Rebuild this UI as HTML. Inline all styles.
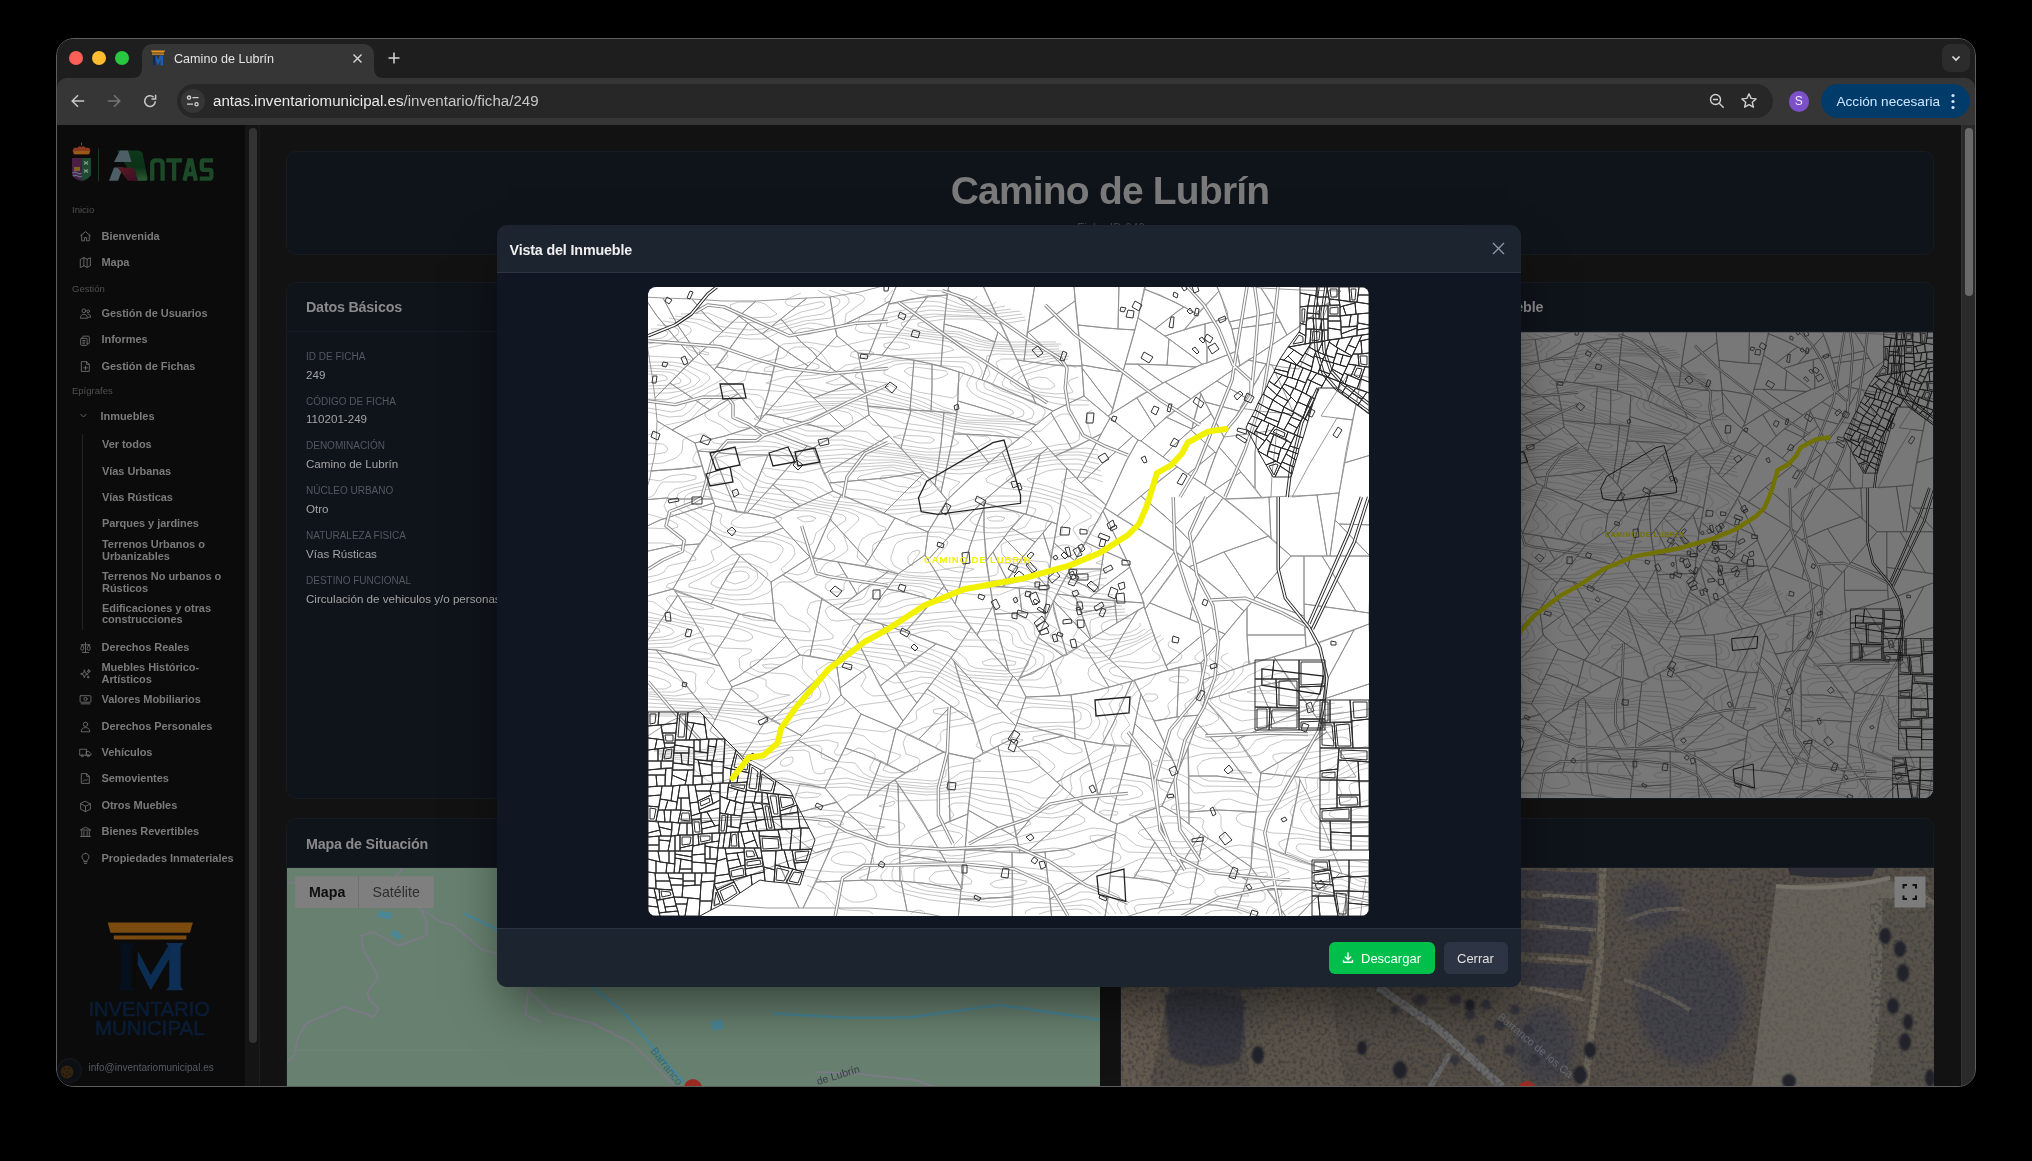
<!DOCTYPE html>
<html><head><meta charset="utf-8">
<style>
*{margin:0;padding:0;box-sizing:border-box}
html,body{width:2032px;height:1161px;overflow:hidden;background:#000;font-family:"Liberation Sans",sans-serif}
.a{position:absolute}
#clip{position:absolute;left:0;top:0;width:2032px;height:1161px;clip-path:inset(38px 56px 74px 56px round 18px);will-change:transform}
.tl{width:14px;height:14px;border-radius:50%;top:51px}
.nav{position:absolute;left:101px;color:#7a7a7a;font-size:11px;font-weight:bold;line-height:11.3px;letter-spacing:-0.05px;white-space:nowrap}
.sec{position:absolute;left:72px;color:#505050;font-size:9.5px;line-height:11px}
.lbl{position:absolute;left:306px;color:#545860;font-size:10px;line-height:12px;white-space:nowrap}
.val{position:absolute;left:306px;color:#a4a4a4;font-size:11.6px;line-height:14px;white-space:nowrap}
.card{position:absolute;background:#0f131a;border:1px solid #161b23;border-radius:10px}
.ico{position:absolute;left:79px;width:13px;height:13px}
</style></head>
<body>
<svg width="0" height="0" style="position:absolute"><defs><symbol id="mp" viewBox="0 0 721 629">
<rect width="721" height="629" fill="#fff"/>
<path d="M378 33L354 37L327 32L297 32L270 36L270 39L282 43L312 45L333 53L345 55L408 55M0 96L19 93L19 90L15 88L0 87M265 201L273 198L272 195L264 192L246 188L234 189L231 192L249 199L265 201M455 195L444 191L429 190L417 192L413 195L420 201L448 210L456 216M377 30L354 33L327 30L291 29L261 33L253 36L254 39L264 42L282 45L309 47L330 54L343 57L363 58L413 57M295 90L300 87L298 84L267 80L260 81L256 84L261 88L282 92L288 92L295 90M0 99L24 98L32 96L33 93L26 87L21 85L0 84M454 189L432 183L411 182L399 184L379 192L382 195L399 199L438 212L454 222M273 204L281 201L284 198L282 195L269 189L249 184L240 183L228 185L212 189L209 192L246 204L261 206L273 204M374 27L351 30L285 27L252 31L239 36L238 39L270 46L309 50L327 56L342 59L366 60L411 59M305 111L309 108L310 96L317 84L315 81L312 80L258 76L246 78L236 84L236 87L257 96L263 102L270 105L305 111M0 102L30 101L39 98L42 96L43 93L36 87L27 83L0 81M453 184L432 177L408 177L388 180L367 186L361 189L358 192L360 195L367 198L393 202L429 213L445 222L453 228L453 231L450 235L441 240L440 243L444 248L453 252M260 213L276 210L285 206L295 198L294 195L267 185L243 180L210 184L189 185L183 186L180 189L183 195L198 202L218 204L249 213L260 213M456 272L448 276L456 278M367 378L368 375L355 372L342 372L334 375L336 378L345 379L367 378M604 486L588 483L585 484L583 486L604 486M211 579L217 576L218 573L213 569L204 565L195 565L189 567L184 570L183 573L187 576L195 578L211 579M372 24L345 27L282 23L252 28L229 33L222 36L220 39L228 43L303 52L327 59L342 61L375 63L411 62M0 53L14 51L19 48L20 45L13 42L3 42M360 129L366 126L364 123L330 110L323 105L319 99L319 96L326 84L323 78L318 75L261 73L246 74L214 84L208 87L207 90L216 93L239 96L254 105L279 112L295 120L315 126L342 129L360 129M0 106L21 106L33 104L46 99L52 93L50 90L33 80L21 78L0 79M429 288L447 284L459 283M451 177L429 172L405 173L381 177L356 183L341 189L338 192L339 195L354 201L387 205L416 213L424 216L443 228L443 231L429 238L426 240L425 243L431 252L443 261L444 264L441 267L412 282L412 285L417 288L429 288M286 216L301 213L301 207L302 204L312 195L270 182L246 178L210 180L183 179L153 186L117 181L113 183L118 189L127 192L153 193L165 196L186 210L222 213L246 219L286 216M265 276L266 273L271 267L272 264L270 263L264 265L260 270L260 276L264 279L265 276M375 381L380 378L380 375L377 372L348 366L336 360L315 359L310 360L307 363L318 372L321 378L327 381L357 384L375 381M0 402L17 402L23 399L22 396L17 393L0 388M537 396L541 393L537 390L528 389L522 391L521 393L525 395L537 396M505 414L510 411L509 408L507 407L498 407L494 411L498 414L505 414M623 492L626 489L630 480L630 477L625 471L625 468L633 466L657 466L690 462L702 459L704 456L699 451L693 450L669 453L636 453L621 459L616 465L610 468L597 470L564 471L554 474L549 480L551 489L555 492L561 494L609 495L623 492M478 513L491 510L495 507L494 504L489 500L480 498L471 498L464 501L462 504L464 510L471 513L478 513M353 549L364 546L383 537L381 534L374 531L336 524L318 516L306 516L300 519L306 528L301 534L303 537L318 542L333 552L353 549M201 585L219 582L226 576L225 570L216 558L213 556L186 560L166 570L147 577M150 582L186 585L201 585M444 627L438 623L429 622L401 624L391 627M363 22L348 24L330 24L309 23L288 19L279 19L234 27L216 28L212 30L207 42L211 45L216 46L252 48L298 54L330 63L378 65L414 64M0 57L21 53L29 48L31 45L30 42L24 39L9 38M167 45L166 42L159 41L152 42L146 45L153 48L162 47L167 45M365 132L375 129L376 126L375 123L358 114L333 105L329 102L328 96L334 87L334 84L330 75L321 70L243 72L207 81L189 92L178 96L186 98L210 97L226 99L249 108L270 113L285 120L315 129L339 132L365 132M0 112L18 113L30 109L54 99L61 93L62 90L59 87L36 77L24 75L0 75M450 172L432 168L417 168L375 174L327 186L312 187L297 186L273 180L246 175L213 177L186 175L153 179L144 176L132 170L123 168L100 171L93 174L91 177L95 183L108 192L117 196L156 201L163 204L170 210L178 213L213 217L240 223L306 219L330 211L345 209L384 209L403 213L416 219L422 228L422 231L414 239L414 246L412 249L405 251L372 252L358 255L353 258L354 267L357 270L363 272L399 275L400 276L402 285L405 288L414 291L429 292L459 286M319 285L326 282L312 280L297 282L290 276L288 273L289 270L299 258L300 255L296 252L291 250L276 249L257 252L250 255L247 258L243 270L243 273L246 279L258 285L276 286L297 282L310 285L319 285M417 271L408 273L405 272L402 264L405 261L414 258L420 258L427 261L429 264L426 267L417 271M379 384L387 378L388 375L387 371L381 368L359 363L348 353L312 353L306 351L300 345L291 343L273 345L263 348L260 351L269 357L301 369L306 372L314 381L321 384L357 387L379 384M0 405L26 405L34 402L35 399L35 396L30 392L9 382L0 380M517 432L522 426L520 420L520 417L525 412L531 407L543 404L552 399L560 393L562 390L561 387L555 385L534 383L515 384L508 387L502 396L488 405L483 411L482 417L492 429L510 434L517 432M711 438L699 442L666 448L636 448L618 450L608 453L601 462L594 465L555 467L531 473L507 474L504 477L534 488L555 499L627 500L633 498L639 484L651 474L720 459M496 516L506 513L509 510L501 499L495 495L462 491L453 493L448 498L449 510L457 516L474 518L496 516M170 510L173 507L159 505L147 507L151 510L156 511L170 510M87 523L102 521L120 510L114 509L72 511M213 615L225 612L229 609L228 606L225 599L211 591L228 583L232 579L237 570L256 564L261 561L267 553L282 545L297 543L312 546L315 549L306 558L306 561L312 563L318 563L334 561L384 546L415 543L433 537L437 534L436 531L429 527L405 531L390 530L360 519L339 516L318 509L288 513L249 514L244 510L234 508L201 508L188 516L163 522L213 526L228 531L249 534L256 537L257 540L252 544L243 548L204 550L144 564L141 567M153 588L167 591L180 597L198 612L204 615L213 615M243 519L234 520L231 519L246 514L247 516L243 519M546 552L546 549L532 537L528 536L519 536L493 543L490 546L498 552L504 553L534 555L546 552M453 627L444 620L435 618L385 621L378 624L377 627M720 619L702 622L695 624L691 627M278 627L275 624L270 623L266 624L263 627M194 3L215 9L217 12L215 15L198 27L197 36L192 40L186 41L171 37L162 36L138 42L117 52L102 52L78 49L69 50L65 54L66 57L78 65L80 69L75 75L66 78L57 78L36 71L0 69M357 19L342 22L321 22L309 20L291 15L279 14L243 17L237 15L237 12L245 3M0 61L27 55L35 51L43 45L43 42L40 39L30 36L15 34M0 121L24 125L33 123L37 120L41 111L45 108L74 93L93 78L123 67L135 57L159 55L189 60L229 51L246 50L294 58L302 60L306 63L294 66L237 69L219 75L198 78L183 88L171 91L152 93L148 96L155 99L180 105L207 102L219 103L264 115L285 123L318 133L372 135L384 131L386 126L385 123L375 116L338 102L336 99L336 96L342 87L338 75L339 69L348 67L384 68L414 66M450 168L432 165L417 165L375 171L309 183L246 173L219 173L192 171L156 174L133 165L120 163L99 164L67 171L75 175L85 183L111 200L146 204L165 213L180 216L207 219L237 227L249 227L279 223L309 223L333 217L348 215L384 214L397 216L403 219L405 225L398 237L397 243L393 244L324 254L294 245L261 246L249 248L229 255L225 258L224 267L228 273L240 282L252 287L267 289L312 291L339 290L348 288L350 285L350 279L354 276L378 277L387 279L395 288L402 292L438 298L441 300L441 303L446 306L465 308M0 211L6 208L12 197L15 195L36 195L48 192L48 189L36 187L22 189L12 194L0 192M0 241L24 242L30 240L29 237L24 234L0 227M0 290L10 288L16 285L20 279L24 278L48 273L47 270L43 267L24 257L15 256L0 256M456 298L444 298L441 297L450 292L459 291M66 321L61 318L47 315L37 315L36 318L42 321L54 323L66 321M124 333L124 330L117 327L102 325L94 327L96 330L105 333L117 334L124 333M384 387L393 380L396 375L396 369L390 365L369 360L365 357L364 348L361 345L357 344L345 343L324 346L303 339L288 339L234 347L223 351L222 354L228 357L255 359L285 368L297 374L311 384L321 388L360 390L375 389L384 387M705 435L662 444L636 441L604 447L595 450L592 453L590 459L583 462L555 461L543 457L531 451L529 447L534 435L540 426L537 420L537 417L569 393L572 387L567 382L551 375L547 372L547 369L557 360M522 354L520 357L521 360L532 366L534 369L533 372L529 375L498 382L471 379L463 381L461 384L465 388L483 392L486 394L486 399L471 417L473 423L482 438L474 446L473 450L477 456L494 462L497 465L462 475L436 486L433 489L432 492L434 501L434 516L411 525L402 527L390 525L379 522L363 513L342 511L318 505L279 508L240 504L216 503L198 500L171 501L138 497L105 497L93 498L85 504L81 505L63 507M0 407L27 409L45 406L47 405L48 402L47 396L48 387L45 385L30 383L15 376L0 374M461 627L450 617L444 613L438 612L414 617L378 615L345 620L282 613L246 604L237 597L233 591L233 588L245 573L272 564L282 559L285 559L289 564L294 567L303 569L315 568L408 551L444 541L456 542L468 545L477 549L488 558L495 560L534 561L546 560L555 557L560 552L560 549L554 540L556 534L553 531L519 529L495 531L481 528L486 525L507 520L528 510L512 501L510 495L513 492L522 491L531 493L540 498L546 506L549 506L576 504L594 504L605 507L615 513L621 513L631 510L649 501L649 498L646 489L648 486L654 482L693 468L720 465M468 528L456 528L451 525L456 523L470 525L469 528L468 528M99 532L108 534L123 532L144 533L171 529L189 528L204 531L219 538L237 540L231 542L216 542L177 548L156 555L129 558M159 598L176 606L186 618L192 622L198 623L221 624L225 627M678 570L687 567L690 564L685 561L660 557L651 557L649 558L648 561L650 564L660 569L669 571L678 570M720 609L693 617L672 615L663 616L649 621L640 627M181 3L198 9L201 12L201 15L199 18L183 31L156 34L111 47L99 48L66 44L48 36L21 31M348 15L344 18L339 19L321 19L314 18L294 10L270 7L262 3M261 61L252 63L243 62L236 60L236 57L243 55L252 55L260 57L262 60L261 61M51 66L42 63L38 60L47 60L52 63L51 66M0 125L21 130L35 129L42 124L53 111L61 105L72 100L91 96L97 93L99 84L106 78L114 75L135 71L138 69L141 63L147 60L156 60L165 61L173 66L182 78L183 81L180 84L168 88L137 90L118 96L174 108L210 107L225 109L261 118L304 132L318 135L381 138L387 136L394 132L397 126L397 123L391 117L385 114L354 104L345 99L345 96L351 84L348 75L354 72L381 72L417 67M444 123L439 126L440 138L444 153L450 156M60 68L51 66L54 64L61 66L60 68M222 69L210 72L202 69L204 65L216 63L222 64L226 66L222 69M450 163L438 161L411 163L321 178L306 179L252 171L222 169L201 167L159 170L129 160L108 159L78 163L54 162L48 165L45 171L45 174L52 180L0 184M0 296L30 288L42 283L57 279L63 276L66 273L63 264L74 258L73 255L51 244L38 234L19 225L16 219L21 207L27 202L55 195L69 187L75 187L84 189L90 192L93 195L96 201L101 204L135 208L163 216L203 222L225 231L231 238L237 240L238 243L222 247L214 252L211 258L209 270L212 273L233 285L258 290L318 295L354 293L364 288L365 282L372 280L379 282L389 291L395 294L417 300L435 309L447 312L468 312M516 351L508 357L504 363L512 369L512 372L507 375L495 376L471 374L459 377L452 381L451 384L455 390L475 399L474 402L461 417L469 435L463 447L468 462L467 465L462 468L424 486L422 492L424 501L422 507L414 516L402 522L393 522L384 519L373 510L366 507L321 501L288 505L276 505L222 500L201 496L168 498L135 491L114 492L87 491L66 496L60 494L43 480L36 477L18 473M348 246L330 245L294 240L264 239L257 237L262 231L276 227L309 227L333 221L348 220L378 219L388 222L387 225L377 240L366 244L348 246M196 303L196 297L200 291L198 288L195 287L186 290L178 297L177 300L179 303L186 305L192 305L196 303M162 345L162 342L157 336L141 328L134 318L129 316L93 318L60 312L30 309L21 309L18 312L25 321L42 328L75 330L114 340L162 345M702 430L687 433L656 432L633 435L585 446L570 454L561 454L550 450L545 447L545 444L548 441L564 437L571 432L570 429L555 420L553 417L553 414L558 408L576 393L579 387L579 384L576 381L562 372L561 369L567 363M388 393L393 391L400 381L405 372L406 369L405 366L399 363L378 357L374 354L369 343L361 339L306 335L291 335L225 343L216 346L209 354L209 357L215 360L249 363L272 369L291 376L309 387L318 390L348 393L388 393M0 409L27 412L63 412L93 416L105 414L110 411L110 408L106 405L96 401L72 403L63 400L59 396L60 393L67 384L65 381L36 377L18 372L0 370M468 627L458 612L450 607L441 605L432 605L418 612L411 613L384 610L348 615L333 615L276 607L258 603L248 597L244 591L244 585L246 579L249 576L267 571L279 570L312 572L357 564L387 563L405 561L417 562L427 567L421 570L406 573L402 576L409 579L426 580L453 578L467 576L472 573L473 570L471 567L451 561L442 552L442 549L450 548L459 549L468 552L471 555L474 562L480 565L537 567L546 566L566 558L576 549L576 546L573 540L573 529L566 519L573 513L582 512L593 516L609 519L627 517L656 504L659 501L657 492L660 488L684 481L693 474L699 471L720 469M552 522L537 524L523 522L524 519L528 517L540 516L557 519L552 522M186 540L177 540L170 537L172 534L183 533L193 534L196 537L186 540M111 542L141 541L151 543L154 546L153 549L144 551L120 550M720 559L705 559L651 551L638 552L631 555L631 558L636 564L660 574L675 575L699 573L720 576M720 604L708 603L693 598L684 599L672 606L651 614L632 627M170 3L174 6L191 12L192 15L190 18L175 27L156 30L114 42L102 43L81 41L71 39L54 33L27 29M329 9L327 12L321 13L303 6M294 4L279 3M441 118L417 118L405 116L360 102L355 99L354 96L360 85L369 80L399 72L421 69M162 84L144 81L126 85L116 84L117 81L123 79L144 81L162 75L171 78L171 81L162 84M0 148L9 145L18 138L42 133L54 120L72 106L81 104L96 102L141 105L168 111L207 111L222 112L258 120L312 136L357 140L381 145L393 144L408 130L414 127L420 127L427 132L432 144L431 153L426 156L408 158L357 169L309 176L198 162L159 165L129 156L117 154L72 157L66 156L57 147L51 147L39 150L35 153L34 165L28 171L15 176L0 177M105 312L87 313L30 304L18 300L20 297L45 289L68 279L84 268L102 267L123 276L129 273L135 264L135 261L132 258L124 255L90 253L75 249L63 244L50 234L30 222L27 216L30 207L35 204L45 201L75 195L81 198L83 204L90 207L198 224L208 228L211 231L210 234L197 246L196 249L200 261L199 264L192 269L177 277L168 290L156 295L132 295L120 306L105 312M360 240L351 241L339 241L326 237L322 234L323 231L327 228L336 225L354 224L367 225L371 228L371 231L367 237L360 240M0 314L6 315L18 324L34 330L78 335L126 349L150 353L168 354L183 352L185 351L185 348L160 327L159 324L162 316L168 314L204 311L210 306L211 300L214 297L222 293L231 291L276 294L309 300L339 301L348 301L369 295L378 294L408 302L435 315L471 316M513 348L483 367L451 375L444 378L441 381L440 387L443 393L461 402L460 405L450 414L460 435L455 447L457 456L453 461L445 465L439 471L417 484L413 492L415 501L413 504L408 508L399 511L393 511L372 503L351 498L321 496L291 502L279 502L225 497L198 491L171 494L160 492L141 484L135 484L120 487L108 487L100 486L97 483L97 480L90 477L69 480L41 474L12 470M696 425L681 427L615 431L594 434L588 432L567 419L562 414L567 405L579 396L586 387L586 384L584 381L575 375L573 372L574 369L580 366M408 399L413 396L413 393L408 387L408 384L415 372L416 369L414 366L405 361L384 354L380 351L375 339L366 334L315 329L260 336L213 336L205 339L203 345L195 354L195 357L201 361L216 364L258 369L288 380L306 389L318 393L348 397L396 401L408 399M0 412L102 419L111 418L126 412L142 408L132 407L126 405L118 399L118 393L95 384L92 381L91 372L94 369L102 366L104 363L102 362L75 361L57 355L47 357L42 360L40 363L60 366L65 369L61 372L47 372L33 367L0 366M434 465L434 462L424 456L414 447L399 447L385 450L385 453L402 457L417 466L426 467L434 465M370 456L375 453L363 450L354 453L354 456L360 458L370 456M143 477L145 474L145 471L144 470L137 471L133 474L132 477L135 479L138 479L143 477M720 555L678 552L651 547L624 546L594 538L589 534L588 531L590 528L594 526L624 524L633 521L648 511L667 504L670 501L669 495L670 492L692 483L705 475L720 472M474 627L469 618L472 612L471 609L456 601L447 599L423 596L417 597L405 604L384 605L351 611L336 611L279 604L264 600L255 594L253 582L258 577L267 575L345 574L362 579L426 586L471 581L492 572L501 571L513 571L531 575L549 575L556 573L564 567L579 560L591 558L609 560L630 569L666 579L678 580L696 579L720 580M720 600L711 599L693 592L681 592L651 607L627 624L625 627M601 609L599 606L587 606L588 609L601 609M153 6L139 12L137 15L139 18L147 20L171 15L175 15L177 18L171 21L153 25L137 33L117 36L81 35L60 26L33 27M441 114L396 109L370 102L362 96L364 90L372 85L401 75L420 72M321 171L306 172L282 171L222 163L195 158L186 158L168 162L156 161L123 149L93 148L84 147L73 138L60 132L57 129L57 126L76 111L83 108L93 106L111 108L115 111L118 117L129 120L159 115L210 114L255 122L312 139L357 143L381 153L384 156L381 159L371 162L321 171M0 156L15 157L18 159L20 162L18 165L15 166L0 168M159 285L150 288L135 285L133 282L143 273L147 267L146 261L144 258L135 254L123 250L93 249L75 245L66 240L57 231L39 220L36 216L37 210L40 207L48 204L63 202L84 210L114 214L138 220L168 222L195 228L198 231L197 234L183 243L179 249L180 252L186 258L187 261L186 264L164 276L159 285M354 234L342 234L339 231L348 229L354 230L357 231L354 234M102 307L93 308L81 308L45 301L41 300L41 297L81 278L90 275L99 275L115 282L119 285L120 288L112 300L102 307M456 370L444 371L435 371L413 360L395 354L389 351L387 348L386 339L381 333L348 321L270 327L240 332L210 332L189 334L183 333L180 330L177 324L179 321L185 318L207 314L214 312L217 309L221 300L225 298L243 295L276 297L312 306L330 308L351 308L371 300L381 299L405 305L423 317L429 319L474 319M507 348L471 365L456 370M0 325L36 334L92 342L100 345L104 348L105 351L99 354L90 354L72 349L63 349L48 351L24 360L0 361M695 420L675 423L636 425L595 423L573 415L571 411L572 408L585 396L593 387L595 384L595 378L597 375L603 375M0 416L105 423L156 413L162 411L164 408L164 405L162 402L147 390L138 387L111 385L103 381L102 378L103 375L108 373L138 370L153 360L171 358L180 359L210 367L258 375L288 384L312 395L360 408L374 411L435 416L441 418L447 423L452 435L450 441L441 452L435 450L421 444L411 442L378 445L357 444L345 448L343 450L342 456L347 462L360 465L384 463L390 464L406 477L407 480L402 485L381 496L360 492L327 490L297 498L279 500L225 494L210 489L192 480L180 482L177 483L177 486L171 487L167 486L165 483L161 465L156 463L138 464L117 473L111 473L87 471L57 473L12 469M720 550L675 547L644 540L645 531L642 525L645 519L653 513L677 507L681 505L681 495L684 492L711 478L720 476M481 627L477 621L477 618L483 614L492 612L519 610L526 606L524 603L510 593L486 588L488 585L492 584L498 583L513 585L543 581L570 583L580 579L588 572L594 570L633 575L666 585L667 588L662 591L639 593L631 597L630 600L634 606L633 609L630 613L621 620L618 627M357 606L333 607L279 600L270 597L266 594L266 585L267 582L273 580L303 579L318 580L339 586L384 587L398 591L398 594L393 598L357 606M720 596L711 594L702 588L704 585L720 584M613 615L617 612L617 609L617 606L612 603L579 600L573 600L567 603L567 606L570 609L577 612L597 615L613 615M123 30L102 31L90 29L84 24L82 18L90 15L111 15L117 17L129 27L123 30M423 106L408 107L390 105L373 99L370 96L370 93L372 90L378 87L410 78L423 78L428 81M430 90L422 93L420 96L425 105L423 106M318 168L277 168L222 160L195 153L183 153L168 156L159 156L129 143L90 140L71 129L70 126L85 114L93 111L102 112L108 120L126 123L141 123L171 117L201 116L255 126L288 136L315 142L348 145L354 147L363 153L364 156L360 159L318 168M165 256L162 258L159 257L123 245L96 246L81 243L73 237L72 234L74 228L69 225L54 222L48 217L47 213L51 210L57 209L78 214L108 217L135 223L162 224L180 228L184 231L183 234L168 246L165 256M90 303L80 303L68 300L63 297L64 294L74 285L87 280L99 280L109 285L110 291L105 297L99 301L90 303M237 327L201 327L193 324L197 321L216 317L223 312L229 303L243 299L258 298L273 300L292 306L303 312L300 315L260 318L237 327M453 366L444 366L435 364L403 351L402 348L409 342L374 321L368 315L368 312L376 306L387 305L401 309L408 318L423 323L432 324L477 322M505 345L489 354L453 366M0 330L50 339L56 342L54 345L24 356L0 357M0 420L60 422L111 426L132 423L165 415L172 411L173 405L168 396L158 387L154 381L155 369L156 366L160 363L171 362L238 378L249 387L267 384L285 386L309 399L354 414L432 420L439 423L442 426L444 435L441 440L435 442L411 439L378 441L355 435L345 437L330 444L329 447L331 453L328 459L338 465L351 469L384 470L391 474L392 477L390 480L381 483L363 485L318 484L312 486L300 494L285 497L234 493L222 490L215 486L207 476L183 474L174 471L173 468L174 462L172 459L168 458L144 460L111 469L87 466L48 470L9 467M663 420L645 420L618 415L591 414L582 411L581 408L583 405L600 389L622 378M687 416L663 420M129 381L117 381L114 378L123 377L133 378L129 381M720 540L684 542L669 541L660 535L652 522L656 516L663 513L687 512L692 510L694 507L690 498L691 495L712 483L720 481M606 597L588 596L582 594L580 591L581 588L588 584L615 580L630 580L638 582L641 585L618 595L606 597M321 597L306 598L289 597L282 594L281 591L287 585L303 583L311 585L321 591L324 594L323 597L321 597M546 600L540 601L531 598L527 594L526 591L529 588L540 585L546 585L554 588L556 591L556 594L552 598L546 600M366 600L351 601L346 600L342 597L347 594L360 591L379 594L377 597L366 600M489 627L486 621L489 618L528 615L549 611L603 620L609 623L611 627M402 102L393 102L383 99L380 96L380 93L390 90L399 91L405 96L407 99L402 102M315 165L276 165L228 158L201 149L159 149L106 132L111 129L144 125L171 119L198 118L240 129L255 136L292 141L321 148L340 150L343 153L327 162L315 165M108 240L96 241L88 240L83 237L84 234L102 222L120 225L134 231L132 234L129 235L108 240M165 234L156 235L149 231L156 229L162 229L168 231L165 234M87 297L78 294L78 291L80 288L85 285L93 284L98 285L101 288L101 291L97 294L87 297M240 319L234 320L231 320L230 318L236 309L243 306L262 303L274 306L278 309L255 313L240 319M450 360L441 360L428 354L425 351L430 342L427 333L430 330L443 327L477 325M503 342L495 348L486 352L450 360M0 333L12 334L41 342L40 345L24 352L0 354M0 424L57 424L114 430L132 428L174 418L180 416L182 411L177 396L169 387L168 384L180 376L189 374L204 375L219 379L225 382L234 391L246 396L258 395L273 390L285 391L306 403L327 411L339 419L353 423L354 426L345 428L327 436L303 440L294 444L292 447L293 453L288 459L288 462L297 466L326 471L333 474L303 480L298 483L298 489L294 492L285 494L237 490L228 488L222 483L222 480L227 471L227 468L224 465L216 462L210 461L198 468L188 468L186 465L190 459L190 456L180 453L150 456L111 464L87 463L48 467L9 466M663 409L648 411L621 406L606 407L599 405L606 403L621 404L627 403L630 399L615 393L616 390L636 385M651 393L651 396L654 399L666 405L663 409M429 435L384 436L362 426L368 423L384 420L423 422L429 423L433 426L433 432L429 435M720 536L696 537L678 536L668 531L663 525L663 522L665 519L669 518L690 517L702 513L704 510L701 501L702 497L708 495L720 495M612 592L603 593L594 591L596 588L600 587L618 585L620 588L612 592M510 627L512 624L516 623L540 622L561 618L593 621L601 624L604 627M306 159L282 162L238 156L228 153L219 145L213 144L159 144L142 138L136 135L135 132L177 121L198 121L211 126L225 138L297 147L304 150L311 156L306 159M474 351L459 353L447 351L443 348L442 345L442 336L443 333L451 330L480 328M497 342L487 348L474 351M0 335L17 339L24 342L26 345L22 348L15 350L0 351M0 427L60 427L89 432L111 438L156 426L183 422L196 417L197 414L187 396L179 387L180 384L186 381L195 380L207 381L216 386L218 390L213 399L218 405L225 409L241 408L276 396L285 397L308 411L311 414L311 417L306 420L288 422L285 423L286 426L297 428L312 424L319 426L320 429L313 432L300 434L275 441L258 449L255 456L258 467L270 471L272 474L269 483L261 485L243 486L235 483L237 479L251 471L253 468L234 462L223 456L216 449L204 446L186 446L114 460L87 460L45 466L6 464M720 532L693 532L686 531L681 528L682 525L684 524L720 513M557 627L564 624L576 623L589 624L594 627M198 139L165 139L156 138L153 135L177 125L190 123L201 126L204 129L205 135L198 139M282 156L271 156L245 150L252 148L273 149L282 150L287 153L282 156M483 345L471 348L462 348L455 345L453 339L455 336L462 333L483 331M492 336L492 339L489 342L483 345M0 339L11 342L12 345L0 347M0 429L36 429L57 430L81 435L105 446L117 447L129 444L145 435L154 432L177 430L213 418L243 414L270 406L279 407L287 411L285 414L269 423L268 426L269 432L265 435L237 445L177 438L154 447L117 454L87 457L48 464L6 463M720 529L702 528L701 525L708 522L720 520" stroke="#b9b9b9" stroke-width=".8" fill="none"/>
<path d="M556 549L553 547L541 565L533 578L511 621L529 618L542 617L551 571L556 549M589 622L610 629L617 630L645 640L625 610L603 581L589 622M554 556L542 617L568 618L589 622L599 594L586 582L554 556M603 580L582 565L556 549L554 556L586 582L599 594L603 581L603 580M135 241L126 231L89 224L67 219L64 231L62 243L82 261L102 254L135 241M123 295L162 270L135 241L102 254L82 261L123 295M218 107L210 66L194 53L189 49L168 71L186 83L218 107M118 127L107 139L165 161L190 146L153 135L118 127M146 94L118 127L153 135L190 146L197 142L169 114L146 94M205 96L168 71L146 94L166 111L205 96M221 128L218 107L205 96L166 111L197 142L221 128M706 343L665 358L626 370L663 423L706 343M724 396L721 337L706 343L667 415L724 396M727 421L724 396L667 415L663 423L668 430L727 421M612 486L638 489L664 491L691 491L708 490L694 467L679 445L659 459L612 486M589 452L612 486L659 459L679 445L662 421L589 452M627 436L662 421L641 393L611 399L627 436M557 413L576 435L589 452L627 436L611 399L584 405L557 413M555 393L557 413L592 403L641 393L626 370L590 381L555 393M599 321L553 376L555 393L601 377L599 350L599 321M674 269L656 269L656 317L708 324L674 269M721 326L723 269L674 269L708 324L721 326M658 360L721 337L721 326L656 317L658 360M599 348L601 377L658 360L657 348L599 348M608 310L599 321L599 348L657 348L656 329L634 321L608 310M643 269L608 310L634 321L656 329L656 269L643 269M464 574L467 547L429 560L413 563L397 565L402 612L423 601L438 592L464 574M405 644L431 641L456 635L460 612L464 574L438 592L423 601L402 612L405 644M364 643L389 645L405 644L397 565L389 566L364 565L364 643M312 612L310 633L349 641L364 643L365 610L342 611L335 612L312 612M317 563L312 612L335 612L342 611L365 610L364 565L356 565L332 563L317 563M412 498L388 476L362 453L350 459L368 549L383 531L412 498M378 566L394 565L416 563L453 553L467 547L469 537L452 529L435 518L378 566M372 566L378 566L384 561L435 518L412 498L383 531L368 549L372 566M320 523L317 563L332 563L356 565L372 566L369 551L320 523M326 472L320 523L369 551L350 459L326 472M91 327L27 304L42 327L66 368L79 348L91 327M138 349L127 334L91 327L79 348L66 368L81 395L88 391L108 377L126 361L138 349M84 400L115 388L152 368L138 349L126 361L108 377L88 391L81 395L84 400M531 380L486 393L506 434L529 430L531 380M552 428L557 412L553 376L531 380L529 430L552 428M530 485L540 460L552 428L528 430L506 434L521 466L530 485M525 473L493 407L487 437L525 473M524 496L530 485L525 473L487 437L481 465L475 486L524 496M462 534L469 537L476 535L495 525L514 519L524 496L475 486L462 534M423 408L378 410L369 436L427 452L426 430L423 408M484 394L451 403L423 408L426 430L427 452L454 457L465 437L484 394M482 459L493 407L486 393L484 394L465 437L454 457L482 459M446 525L462 534L482 459L466 459L446 525M451 510L466 459L436 454L451 510M409 495L428 512L446 525L451 510L442 476L409 495M370 460L409 495L442 476L436 454L415 449L370 460M362 453L370 460L415 449L369 436L362 453M152 219L185 204L165 161L159 159L125 198L152 219M99 226L126 231L152 219L125 198L99 226M96 226L99 226L104 221L150 169L120 168L96 226M89 225L96 226L120 168L92 168L65 165L79 201L89 225M50 164L61 201L67 219L89 225L79 201L65 165L50 164M107 139L77 149L47 156L50 164L85 167L150 169L159 159L107 139M490 323L441 353L461 372L473 351L490 323M485 394L520 383L509 356L496 320L490 323L473 351L461 372L485 394M461 400L485 394L441 353L435 357L461 400M412 409L441 405L461 400L435 357L402 376L412 409M372 391L370 394L378 410L412 409L402 376L385 386L372 391M390 350L379 378L372 391L397 379L415 369L390 350M405 316L390 350L415 369L419 368L409 333L405 316M406 314L405 316L406 325L419 368L442 352L406 314M469 336L496 320L496 316L467 314L469 336M467 319L467 314L427 309L433 326L467 319M443 352L469 336L467 319L433 326L443 352M409 307L406 314L430 340L442 352L443 352L427 309L409 307M441 311L457 313L496 316L482 280L441 311M418 289L412 300L409 307L441 311L449 305L418 289M450 304L482 280L479 274L456 264L450 304M422 282L418 289L449 305L450 304L453 282L422 282M437 255L422 282L453 282L456 264L437 255M455 224L437 255L479 274L455 224M493 308L497 322L535 270L527 264L513 283L493 308M457 221L455 224L477 269L493 308L513 283L527 264L457 221M529 180L493 154L490 153L478 174L457 221L469 229L512 193L529 180M493 209L469 229L510 254L535 270L544 256L517 229L493 209M567 205L529 180L493 209L527 238L543 223L567 205M575 211L567 205L543 223L527 238L544 256L563 227L575 211M621 249L595 227L575 211L558 235L533 274L541 280L573 266L621 249M607 311L643 269L621 249L576 265L607 311M596 324L607 311L576 265L541 280L596 324M551 287L533 274L502 316L542 332L551 287M577 347L596 324L551 287L542 332L577 347M563 341L502 316L497 322L507 352L518 379L535 364L563 341M553 376L577 347L563 341L535 364L518 379L520 383L553 376M192 401L193 408L213 427L249 442L255 434L239 411L222 379L192 401M206 347L188 374L192 401L222 379L206 347M269 416L308 364L288 357L248 387L256 399L269 416M232 399L255 434L269 416L256 399L248 387L232 399M257 379L288 357L255 344L234 337L257 379M216 332L206 347L232 399L257 379L234 337L216 332M239 302L216 332L237 338L257 345L285 313L260 306L239 302M296 299L277 268L250 287L239 302L260 306L285 313L296 299M323 341L309 320L296 299L273 328L257 345L308 364L323 341M335 466L362 453L368 439L327 398L306 374L335 466M271 452L296 465L326 472L335 466L326 435L303 419L271 452M279 402L249 442L271 452L303 419L279 402M303 371L279 402L326 435L312 395L306 374L303 371M365 389L338 359L323 341L303 371L319 389L349 419L365 389M370 394L365 389L349 419L368 439L378 410L370 394M187 42L189 49L194 53L210 66L221 67L242 14L228 22L187 42M250 -5L212 5L182 10L187 42L228 22L242 14L250 -5M234 68L264 73L293 79L296 39L299 8L280 9L234 68M241 17L221 67L234 68L280 9L241 17M303 -13L281 -11L250 -5L241 17L263 12L299 8L303 -13M334 93L388 117L362 56L350 45L334 93M296 37L293 79L314 86L334 93L347 55L318 43L296 37M300 3L296 37L318 43L347 55L350 45L325 22L300 3M330 -12L303 -13L300 3L319 17L362 56L330 -12M387 -3L338 -11L330 -12L369 73L376 74L382 27L387 -3M427 14L426 -1L406 -1L387 -3L379 46L397 35L427 14M380 45L379 46L376 74L415 79L380 45M434 79L427 14L398 35L380 45L415 79L434 79M405 124L436 109L434 79L405 78L369 73L388 117L405 124M259 624L281 627L310 633L313 603L275 596L253 594L259 624M168 595L155 621L221 621L259 624L253 594L224 593L168 595M199 525L197 526L168 595L219 593L228 553L219 543L199 525M241 497L199 525L219 543L228 553L241 497M298 575L272 529L250 497L252 568L275 571L298 575M252 594L282 597L313 603L314 602L298 575L275 571L252 568L252 594M247 493L241 497L219 593L252 594L250 497L247 493M280 544L314 602L320 527L287 541L280 544M300 466L296 465L289 468L271 478L247 493L263 517L280 544L302 534L300 466M326 472L300 466L302 534L320 527L326 472M681 15L648 42L624 58L609 68L600 73L634 80L651 82L671 42L681 15M733 165L743 95L714 89L699 159L696 176L733 165M725 238L730 191L733 165L696 176L687 233L691 237L725 238M722 269L723 269L725 238L691 237L722 269M682 269L722 269L687 233L682 269M679 269L682 269L691 206L669 208L679 269M623 252L643 269L679 269L669 208L621 210L623 252M577 212L595 226L623 252L621 210L577 212M624 78L618 77L613 85L610 92L592 121L619 125L646 127L624 78M705 133L714 89L700 87L673 129L705 133M644 210L691 206L705 133L689 131L661 178L644 210M609 146L576 150L571 160L607 201L607 166L609 146M614 211L623 210L624 187L629 142L609 146L607 166L607 201L614 211M565 204L577 212L614 211L593 185L565 204M557 198L565 204L593 185L571 160L561 185L557 198M598 111L618 77L600 73L583 84L569 94L598 111M591 124L598 111L569 94L552 105L557 115L591 124M576 150L591 124L557 115L576 150M568 166L576 150L563 127L543 143L568 166M540 187L557 198L568 166L567 165L561 170L540 187M515 170L540 187L567 165L543 143L525 159L515 170M544 142L563 127L553 107L544 142M544 142L545 135L551 114L553 107L552 105L518 130L544 142M493 154L515 170L525 159L544 142L518 130L493 154M159 11L108 14L91 29L114 47L159 11M169 70L189 49L182 10L159 11L133 32L153 55L164 64L169 70M160 79L169 70L164 64L153 55L133 32L114 47L160 79M100 36L91 29L51 67L66 83L100 36M69 80L66 83L89 105L112 133L120 106L124 88L85 83L69 80M131 59L100 36L69 80L85 83L124 88L131 59M112 133L160 79L131 59L121 104L112 133M22 96L7 111L9 134L24 143L62 123L22 96M90 107L51 67L22 96L62 123L90 107M47 156L77 149L100 142L107 139L112 133L90 107L64 122L24 143L47 156M388 138L405 124L340 95L311 85L310 114L344 124L388 138M372 151L388 138L344 124L310 114L306 147L340 148L372 151M341 176L372 151L352 149L318 147L341 176M293 205L299 213L322 191L341 176L318 147L306 147L293 205M266 73L234 68L210 66L218 105L220 119L262 123L266 73M284 77L266 73L262 123L283 124L284 101L284 77M309 127L311 85L284 77L284 101L283 124L309 127M287 198L293 205L303 159L309 127L296 125L293 158L287 198M253 161L287 198L293 158L296 125L263 123L253 161M221 128L253 161L263 123L220 119L221 128M610 509L613 486L604 472L586 447L572 429L557 412L549 436L576 464L591 483L610 509M540 461L514 519L525 525L541 537L540 461M598 493L579 468L549 436L540 461L541 489L569 489L598 493M608 525L610 509L598 493L569 489L541 489L541 525L570 523L592 524L608 525M553 547L574 560L603 580L608 525L592 524L570 523L541 525L541 537L553 547M54 179L47 156L9 134L8 157L6 171L3 184L33 182L54 179M64 212L54 179L33 182L3 184L2 191L-5 213L18 211L26 212L56 212L64 212M66 216L64 212L56 212L26 212L18 211L-5 213L-7 230L-7 242L12 233L66 216M51 257L62 243L64 231L67 219L66 216L12 233L-7 242L-4 265L23 259L51 257M25 302L51 257L23 259L-4 265L-2 286L-1 309L25 302M-4 10L-6 10L-4 39L4 88L7 111L45 72L9 29L-4 10M15 11L-4 10L9 29L45 72L50 68L29 37L15 11M44 12L15 11L29 37L50 68L75 44L58 29L44 12M108 14L75 14L44 12L58 29L75 44L108 14M95 469L118 481L136 466L154 449L120 430L95 469M83 402L72 422L62 444L82 460L95 469L120 430L101 417L83 402M188 374L152 368L115 388L84 400L83 402L103 419L123 433L150 410L188 374M193 408L188 374L150 410L123 433L154 449L193 408M639 48L659 34L677 19L693 4L652 3L613 1L626 22L639 48M627 25L621 13L613 1L567 -5L574 12L581 35L609 29L627 25M632 35L627 25L609 29L581 35L584 42L614 38L632 35M592 79L639 48L632 35L614 38L584 42L592 79M434 81L436 109L460 129L463 127L465 122L434 81M434 78L434 81L465 122L475 85L434 78M430 38L434 78L475 85L487 43L457 41L430 38M471 -4L426 -1L430 38L470 42L471 -4M499 -7L471 -4L470 42L487 43L499 -7M515 96L548 80L513 78L489 77L515 96M477 77L463 127L491 109L515 96L489 77L477 77M519 78L548 80L554 77L548 72L521 52L519 78M490 31L477 77L519 78L521 52L490 31M507 42L517 49L536 43L549 27L536 20L530 24L507 42M496 2L490 31L507 42L530 24L536 20L512 8L496 2M571 4L567 -5L527 -8L499 -7L496 2L527 15L549 27L571 4M580 31L579 24L571 4L536 43L544 40L580 31M557 37L532 44L517 49L543 68L554 77L559 76L559 60L557 52L557 37M589 64L583 38L580 31L557 37L557 52L559 60L559 76L589 64M543 112L577 88L592 79L589 64L548 80L517 95L543 112M507 140L518 131L543 112L517 95L489 111L507 140M490 153L493 154L507 140L489 111L460 129L490 153M407 169L429 192L453 147L424 161L407 169M403 126L383 142L407 169L424 162L403 126M462 131L436 109L405 124L403 126L424 162L453 147L462 131M485 149L462 131L429 192L433 196L485 149M458 218L479 173L490 153L485 149L433 196L458 218M427 274L438 255L458 218L440 203L419 181L406 256L427 274M397 334L407 310L427 274L406 256L403 272L399 307L397 334M392 167L353 199L336 214L336 216L378 227L392 167M409 237L419 181L400 161L392 167L378 227L409 237M376 227L336 216L336 244L338 274L357 249L376 227M345 265L338 274L342 299L355 300L359 293L345 265M356 251L345 265L359 293L375 270L356 251M363 241L356 251L375 270L387 255L363 241M404 235L376 227L363 241L387 255L404 235M403 271L409 237L404 235L395 246L403 271M399 300L403 271L395 246L374 271L399 300M399 303L399 300L374 271L355 300L399 303M371 301L342 299L347 327L374 326L371 301M397 325L399 303L371 301L374 326L397 325M361 385L370 394L382 370L397 334L397 325L347 327L352 353L361 385M329 348L339 361L361 385L352 353L345 319L329 348M307 317L329 348L345 319L339 276L336 243L336 221L330 236L322 259L307 317M280 273L288 285L307 317L322 259L330 236L336 221L336 214L314 235L280 273M365 190L400 161L383 142L354 165L365 190M298 216L280 245L277 268L280 273L306 244L298 216M299 213L298 216L299 221L306 244L320 229L331 218L353 199L365 190L354 165L326 188L299 213M190 475L213 427L193 408L169 434L150 453L162 460L190 475M177 501L190 475L162 460L150 453L126 474L108 489L139 495L163 498L170 500L177 501M637 567L644 569L665 578L694 587L672 532L652 493L646 523L637 567M651 490L613 486L604 555L637 567L651 501L652 493L651 490M691 652L710 654L714 615L718 592L703 589L695 628L691 652M643 637L645 640L652 642L671 648L691 652L695 628L703 589L692 586L643 637M619 603L643 637L678 600L670 601L619 603M603 580L619 603L670 601L678 600L692 586L652 574L604 555L603 580M217 279L250 287L277 268L280 245L247 231L217 279M220 274L247 231L193 208L182 232L220 274M165 271L217 279L220 274L182 232L165 271M126 231L157 265L162 270L165 271L174 250L193 208L185 204L126 231M131 577L151 621L155 621L183 561L131 577M189 515L177 501L152 497L141 528L189 515M197 526L189 515L156 524L122 532L139 544L168 566L183 561L197 526M241 149L221 128L165 161L176 187L241 149M275 185L241 149L176 187L181 196L237 191L275 185M236 226L280 245L299 213L276 186L236 226M185 204L236 226L276 186L275 185L237 191L181 196L185 204M92 269L62 243L48 263L25 302L63 317L92 269M127 334L123 295L92 269L63 317L95 328L127 334M190 275L162 270L135 288L190 322L209 307L190 275M241 284L190 275L209 307L241 284M212 338L250 287L241 284L210 307L190 322L212 338M162 369L188 374L212 338L200 329L174 311L162 369M127 334L152 368L162 369L174 311L135 288L123 295L127 334M219 511L257 486L233 474L219 511M197 461L177 501L197 526L219 511L233 474L215 467L197 461M248 442L213 427L197 461L215 467L239 478L248 442M296 465L248 442L239 478L257 486L276 475L296 465M528 587L542 563L553 547L531 529L514 519L487 529L503 550L528 587M507 555L487 529L469 537L462 589L486 591L507 555M523 597L528 587L507 555L486 591L511 594L523 597M456 635L464 634L504 622L511 621L523 597L510 594L498 592L477 590L462 589L461 605L456 635M64 603L66 617L119 621L151 621L131 577L64 603M30 308L25 302L-1 309L-4 359L30 308M72 379L39 322L30 308L-4 359L-5 362L10 363L40 370L72 379M67 433L84 400L72 379L31 368L8 363L25 382L43 405L67 433M56 420L26 383L8 363L-5 362L-6 397L-6 453L21 435L42 425L56 420" stroke="#8f8f8f" stroke-width=".9" fill="none"/>
<path d="M47.0 25.3L59.7 18.0L76.0 19.9L108.5 34.4L141.0 48.8L180.9 41.6L208.0 36.2L240.0 34.4M0.0 54.0L27.0 56.0L72.0 59.7L108.5 72.3L141.0 81.4L181.0 86.8L240.0 81.4M0.0 114.0L27.0 117.6L54.0 110.3L79.6 110.3L85.0 117.6L85.0 130.2L101.0 137.5L115.8 148.3L108.5 153.7L79.6 153.7L65.0 170.0L54.0 210.0M115.8 148.3L162.8 133.8L199.0 115.8L240.0 97.7M240.0 155.5L217.0 166.4L199.0 190.0L195.3 210.0M294.3 3.6L321.4 12.7L341.3 25.3L377.5 50.6L413.6 72.3L419.0 81.4L417.2 101.3L420.9 123.0L435.3 148.3L457.0 159.2L480.0 168.2M397.3 18.0L426.3 47.0L480.0 88.6L512.0 113.0L552.0 138.0M250.8 15.4L316.0 61.5L341.3 77.8L399.2 115.8M606.7 0.0L610.3 25.3L606.7 72.4L603.0 108.6L588.6 130.3L577.7 143.0M539.7 0.0L556.0 18.0L570.5 41.6L585.0 77.8L603.0 94.0L603.0 108.6M32.4 533.4L90.0 531.6L153.0 530.7L180.0 533.4L198.0 544.2L240.0 558.6L294.0 562.2L366.0 558.6L402.0 574.8L438.0 598.3L480.0 616.3M187.2 629.0L194.5 591.0L216.0 578.4L240.0 578.4L312.0 576.6L366.0 582.0L402.0 598.3L420.0 629.0M480.0 506.4L438.0 510.0L402.0 517.2L380.4 531.6L348.0 542.4L321.0 556.8M301.2 420.0L299.4 465.0L290.4 501.0L290.4 528.0L304.8 556.8M480.0 445.0L501.6 474.0L510.6 528.0L525.0 567.6L561.0 585.6L615.0 591.0L642.0 592.8M670.8 443.4L638.4 501.0L620.4 531.6L616.8 546.0L624.0 582.0L633.0 629.0M534.0 629.0L570.0 610.8L624.0 600.0L660.0 601.8L721.0 614.4M557.4 448.8L624.0 446.1L660.0 447.0M563.2 313.0L597.6 311.3L633.8 325.8L661.0 340.3M557.8 210.0L541.5 246.2L548.8 287.8L565.0 318.6L570.5 354.7L566.8 391.0L556.0 420.0L537.0 453.0L527.0 493.0L532.0 543.0L552.0 573.0M525.2 210.0L527.0 264.3L539.7 304.0L552.4 336.6L557.8 372.8L550.6 409.0L522.0 443.0L507.0 493.0L512.0 543.0L537.0 583.0M599.0 0.0L592.0 43.0L584.0 93.0L564.0 143.0L548.0 183.0L532.0 210.0M630.0 0.0L624.0 53.0L614.0 113.0L597.0 163.0L577.0 210.0M0.0 282.3L14.5 273.3L34.4 264.3L36.2 253.4L18.0 238.9L21.7 224.5L45.2 215.4L54.3 210.0M153.7 239.0L168.2 286.0L180.9 289.6L240.0 298.6M0.0 394.5L21.7 420.0L52.0 453.0" stroke="#8a8a8a" stroke-width="3.4" fill="none" stroke-linejoin="round"/>
<path d="M47.0 25.3L59.7 18.0L76.0 19.9L108.5 34.4L141.0 48.8L180.9 41.6L208.0 36.2L240.0 34.4M0.0 54.0L27.0 56.0L72.0 59.7L108.5 72.3L141.0 81.4L181.0 86.8L240.0 81.4M0.0 114.0L27.0 117.6L54.0 110.3L79.6 110.3L85.0 117.6L85.0 130.2L101.0 137.5L115.8 148.3L108.5 153.7L79.6 153.7L65.0 170.0L54.0 210.0M115.8 148.3L162.8 133.8L199.0 115.8L240.0 97.7M240.0 155.5L217.0 166.4L199.0 190.0L195.3 210.0M294.3 3.6L321.4 12.7L341.3 25.3L377.5 50.6L413.6 72.3L419.0 81.4L417.2 101.3L420.9 123.0L435.3 148.3L457.0 159.2L480.0 168.2M397.3 18.0L426.3 47.0L480.0 88.6L512.0 113.0L552.0 138.0M250.8 15.4L316.0 61.5L341.3 77.8L399.2 115.8M606.7 0.0L610.3 25.3L606.7 72.4L603.0 108.6L588.6 130.3L577.7 143.0M539.7 0.0L556.0 18.0L570.5 41.6L585.0 77.8L603.0 94.0L603.0 108.6M32.4 533.4L90.0 531.6L153.0 530.7L180.0 533.4L198.0 544.2L240.0 558.6L294.0 562.2L366.0 558.6L402.0 574.8L438.0 598.3L480.0 616.3M187.2 629.0L194.5 591.0L216.0 578.4L240.0 578.4L312.0 576.6L366.0 582.0L402.0 598.3L420.0 629.0M480.0 506.4L438.0 510.0L402.0 517.2L380.4 531.6L348.0 542.4L321.0 556.8M301.2 420.0L299.4 465.0L290.4 501.0L290.4 528.0L304.8 556.8M480.0 445.0L501.6 474.0L510.6 528.0L525.0 567.6L561.0 585.6L615.0 591.0L642.0 592.8M670.8 443.4L638.4 501.0L620.4 531.6L616.8 546.0L624.0 582.0L633.0 629.0M534.0 629.0L570.0 610.8L624.0 600.0L660.0 601.8L721.0 614.4M557.4 448.8L624.0 446.1L660.0 447.0M563.2 313.0L597.6 311.3L633.8 325.8L661.0 340.3M557.8 210.0L541.5 246.2L548.8 287.8L565.0 318.6L570.5 354.7L566.8 391.0L556.0 420.0L537.0 453.0L527.0 493.0L532.0 543.0L552.0 573.0M525.2 210.0L527.0 264.3L539.7 304.0L552.4 336.6L557.8 372.8L550.6 409.0L522.0 443.0L507.0 493.0L512.0 543.0L537.0 583.0M599.0 0.0L592.0 43.0L584.0 93.0L564.0 143.0L548.0 183.0L532.0 210.0M630.0 0.0L624.0 53.0L614.0 113.0L597.0 163.0L577.0 210.0M0.0 282.3L14.5 273.3L34.4 264.3L36.2 253.4L18.0 238.9L21.7 224.5L45.2 215.4L54.3 210.0M153.7 239.0L168.2 286.0L180.9 289.6L240.0 298.6M0.0 394.5L21.7 420.0L52.0 453.0" stroke="#fff" stroke-width="1.5" fill="none" stroke-linejoin="round"/>
<path d="M0.0 48.8L27.0 38.0L43.4 27.0L59.7 7.2L68.7 0.0M670.0 0.0L666.4 27.0L668.2 63.3L675.4 86.8L688.0 101.3L721.0 125.0M678.0 0.0L674.0 27.0L676.0 63.3L683.0 84.0L695.0 97.0L721.0 117.0M670.0 101.3L653.7 135.7L642.8 181.0L639.2 210.0M630.2 210.0L630.2 282.4L637.4 311.3L661.0 340.3L671.8 360.2L679.0 391.0L675.4 420.0L670.8 443.4M713.4 210.0L700.7 246.2L661.0 336.6M720.6 210.0L706.2 255.2L664.5 342.0" stroke="#262626" stroke-width="3.4" fill="none" stroke-linejoin="round"/>
<path d="M0.0 48.8L27.0 38.0L43.4 27.0L59.7 7.2L68.7 0.0M670.0 0.0L666.4 27.0L668.2 63.3L675.4 86.8L688.0 101.3L721.0 125.0M678.0 0.0L674.0 27.0L676.0 63.3L683.0 84.0L695.0 97.0L721.0 117.0M670.0 101.3L653.7 135.7L642.8 181.0L639.2 210.0M630.2 210.0L630.2 282.4L637.4 311.3L661.0 340.3L671.8 360.2L679.0 391.0L675.4 420.0L670.8 443.4M713.4 210.0L700.7 246.2L661.0 336.6M720.6 210.0L706.2 255.2L664.5 342.0" stroke="#fff" stroke-width="1.5" fill="none" stroke-linejoin="round"/>
<path d="M111 549L113 564L134 563L132 550L111 549M130 543L111 544L111 549L132 550L130 543M144 542L130 543L134 563L142 563L144 542M153 541L144 542L142 563L152 563L153 541M164 562L167 553L161 541L153 541L152 563L164 562M136 563L128 564L127 578L141 581L136 563M144 563L136 563L141 581L148 583L144 563M160 575L164 562L144 563L146 576L160 575M156 585L160 575L146 576L148 583L156 585M138 596L152 598L156 585L145 582L138 596M126 595L138 596L145 582L127 578L126 595M127 583L128 564L113 564L116 580L127 583M117 594L126 595L127 583L116 580L117 594M77 546L72 546L70 561L75 561L77 546M83 545L77 546L75 561L81 561L83 545M90 545L83 545L81 561L91 561L90 545M93 545L90 545L91 561L97 561L93 545M96 557L97 561L110 561L107 553L96 557M104 544L93 545L96 557L107 553L104 544M113 561L111 544L104 544L110 561L113 561M67 589L66 597L83 593L81 587L67 589M69 574L67 589L81 587L79 571L69 574M77 561L70 561L69 574L79 571L77 561M81 582L83 593L98 589L97 578L81 582M93 579L97 578L96 565L89 566L93 579M79 574L81 582L93 579L91 572L79 574M78 567L79 574L91 572L89 566L78 567M96 561L77 561L78 567L96 565L96 561M106 561L96 561L97 573L110 571L106 561M114 571L113 561L106 561L110 571L114 571M115 579L114 571L97 573L97 582L115 579M116 585L115 579L97 582L98 589L116 585M104 598L112 593L117 594L116 585L103 588L104 598M92 606L104 598L103 588L85 593L92 606M86 595L85 593L66 597L69 603L86 595M75 617L82 613L92 606L86 595L69 603L75 617M63 623L75 617L66 597L66 597L63 623M67 594L67 586L54 586L53 595L67 594M64 614L67 594L53 595L52 614L64 614M51 629L52 629L63 623L64 614L52 614L51 629M23 598L26 610L34 610L35 598L23 598M21 591L23 598L35 598L35 592L21 591M35 586L20 586L21 591L35 592L35 586M35 594L35 599L47 598L47 594L35 594M47 586L35 586L35 594L47 594L47 586M53 598L54 586L47 586L47 598L53 598M52 612L53 598L35 599L34 610L52 612M37 629L51 629L52 612L40 611L37 629M39 617L40 611L26 610L28 617L39 617M31 629L37 629L39 617L28 617L31 629M11 602L6 601L9 613L12 613L11 602M26 610L24 603L11 602L12 613L26 610M15 612L9 613L11 626L18 625L15 612M28 619L26 610L15 612L17 620L28 619M30 624L28 619L17 620L18 625L30 624M12 629L31 629L30 624L11 626L12 629M0 619L0 629L12 629L10 620L0 619M0 610L0 619L10 620L8 611L0 610M0 601L0 610L8 611L6 601L0 601M22 594L20 586L7 586L8 594L22 594M8 602L24 603L22 594L8 594L8 602M0 585L0 601L8 602L7 586L0 585M50 547L45 548L45 559L51 558L50 547M64 546L50 547L51 558L64 555L64 546M71 554L72 546L64 546L64 555L71 554M44 568L44 575L57 576L57 567L44 568M57 556L45 559L44 568L57 567L57 556M70 561L71 554L57 556L57 559L70 561M62 560L57 559L57 572L62 572L62 560M69 572L70 561L62 560L62 572L69 572M68 577L69 572L57 572L57 576L68 577M58 586L67 586L68 577L58 576L58 586M44 586L58 586L58 576L44 575L44 586M32 548L27 549L27 564L32 564L32 548M45 558L45 548L32 548L32 561L45 558M44 564L45 558L32 561L32 564L44 564M44 570L44 564L27 564L27 567L44 570M44 574L44 570L27 567L27 571L44 574M44 582L44 574L33 572L32 582L44 582M31 586L44 586L44 582L32 582L31 586M26 586L31 586L33 572L27 571L26 586M18 586L26 586L27 577L19 576L18 586M8 586L18 586L19 576L8 574L8 586M0 572L0 585L8 586L8 574L0 572M21 576L27 577L27 564L21 564L21 576M12 575L21 576L21 564L10 564L12 575M0 564L0 572L12 575L10 564L0 564M20 564L27 564L27 549L23 549L20 564M22 554L23 549L11 549L11 553L22 554M11 564L20 564L22 554L11 553L11 564M0 558L0 564L11 564L11 558L0 558M0 550L0 558L11 558L11 549L0 550M81 496L72 496L72 509L79 512L81 496M98 505L99 495L81 496L80 500L98 505M90 503L80 500L79 512L87 514L90 503M96 517L98 505L90 503L87 514L96 517M82 513L72 509L72 526L77 527L82 513M88 515L82 513L77 527L86 528L88 515M94 529L96 517L88 515L86 528L94 529M83 528L80 527L79 539L83 540L83 528M92 541L94 529L83 528L83 540L92 541M78 546L91 545L92 541L79 539L78 546M71 546L78 546L80 527L72 526L71 546M42 516L43 529L52 526L50 515L42 516M47 498L40 498L42 516L50 515L47 498M64 497L47 498L48 504L62 504L64 497M72 505L72 496L64 497L62 504L72 505M50 514L51 523L65 517L63 508L50 514M62 504L48 504L50 514L63 508L62 504M72 513L72 505L62 504L65 517L72 513M72 521L72 513L51 523L52 526L72 521M53 536L54 542L67 539L64 534L53 536M59 525L53 526L53 536L64 534L59 525M71 538L72 521L59 525L67 539L71 538M54 547L71 546L71 538L54 542L54 547M53 532L53 526L43 529L44 533L53 532M45 548L54 547L53 532L44 533L45 548M39 548L45 548L44 536L39 536L39 548M30 548L39 548L39 536L32 536L30 548M23 549L30 548L32 536L24 535L23 549M24 543L24 535L10 535L11 540L24 543M13 549L23 549L24 543L11 540L13 549M0 546L0 550L13 549L12 543L0 546M0 534L0 546L12 543L10 535L0 534M17 523L28 523L29 515L20 513L17 523M12 512L10 523L17 523L20 513L12 512M25 499L14 499L12 512L23 514L25 499M32 498L25 499L23 514L29 515L32 498M41 511L40 498L32 498L30 511L41 511M33 511L30 511L28 523L33 523L33 511M43 524L41 511L33 511L33 523L43 524M30 536L44 536L43 524L33 523L30 536M22 535L30 536L33 523L23 523L22 535M17 535L22 535L23 523L16 523L17 535M8 534L17 535L16 523L10 523L8 534M0 519L0 534L8 534L11 520L0 519M0 509L0 519L11 520L13 508L0 509M0 500L0 509L13 508L14 499L0 500M17 499L23 499L25 481L18 481L17 499M9 499L17 499L17 488L8 488L9 499M0 488L0 500L9 499L8 488L0 488M0 483L0 488L17 488L18 481L0 483M13 482L25 481L25 474L13 474L13 482M0 474L0 483L13 482L13 474L0 474M14 474L25 474L26 460L16 461L14 474M10 474L14 474L16 461L10 462L10 474M0 463L0 474L10 474L10 462L0 463M28 446L29 436L13 438L14 446L28 446M27 456L28 446L14 446L16 456L27 456M17 461L26 460L27 456L16 456L17 461M7 462L17 461L16 453L9 452L7 462M0 451L0 463L7 462L9 452L0 451M0 439L0 451L16 453L13 438L0 439M11 425L0 425L0 439L10 438L11 425M30 425L11 425L10 438L29 436L30 425M46 464L46 472L59 474L60 466L46 464M52 453L46 453L46 464L52 465L52 453M61 452L52 453L52 465L60 466L61 452M60 459L59 474L65 474L68 460L60 459M69 452L61 452L60 459L68 460L69 452M76 475L77 452L69 452L65 474L76 475M75 486L76 475L64 474L64 486L75 486M65 497L75 496L75 486L64 486L65 497M50 473L46 472L45 489L53 489L50 473M64 478L64 474L50 473L51 476L64 478M64 488L64 478L51 476L53 489L64 488M54 497L65 497L64 488L54 489L54 497M45 498L54 497L54 489L45 489L45 498M37 498L45 498L46 483L40 483L37 498M24 488L23 499L37 498L38 494L24 488M24 483L24 488L38 494L40 483L24 483M25 476L24 483L46 483L46 478L25 476M40 478L46 478L46 461L41 460L40 478M34 477L40 478L41 466L33 466L34 477M26 466L25 476L34 477L33 466L26 466M27 458L26 466L41 466L41 460L27 458M27 453L27 458L46 461L46 453L27 453M40 425L30 425L27 453L38 453L40 425M41 453L59 452L57 438L46 436L41 453M39 435L38 453L41 453L46 436L39 435M56 429L52 425L40 425L39 435L57 438L56 429M77 452L56 429L59 452L77 452L77 452M89 496L99 495L101 486L91 483L89 496M82 496L89 496L91 483L83 482L82 496M75 480L75 496L82 496L83 482L75 480M88 463L77 452L75 480L83 482L88 463M102 477L97 473L88 463L83 482L101 486L102 477M113 483L102 477L98 503L110 505L113 483M128 494L113 483L110 505L125 507L128 494M145 509L142 503L128 494L125 507L145 509M119 543L127 543L121 517L114 517L119 543M109 544L119 543L117 532L107 534L109 544M101 544L109 544L107 534L99 536L101 544M92 537L91 545L101 544L99 536L92 537M115 521L114 517L104 515L106 523L115 521M109 534L117 532L115 521L106 523L109 534M94 526L92 537L109 534L107 525L94 526M96 515L94 526L107 525L104 515L96 515M108 505L98 503L96 515L106 516L108 505M114 505L108 505L106 516L114 516L114 505M119 506L114 505L114 516L121 517L119 506M124 530L127 543L134 542L133 529L124 530M130 507L119 506L124 530L133 529L130 507M149 518L145 509L130 507L132 524L149 518M132 528L134 542L152 541L150 525L132 528M149 518L132 524L132 528L150 525L149 518M161 541L149 518L149 518L152 541L161 541M692 29L692 18L680 19L680 29L692 29M693 34L692 29L680 29L680 34L693 34M693 43L693 34L680 34L680 41L693 43M680 53L694 51L693 43L680 41L680 53M659 26L659 31L671 32L671 27L659 26M672 19L660 19L659 26L671 27L672 19M680 32L680 19L672 19L671 32L680 32M665 31L659 31L658 42L666 42L665 31M674 32L665 31L666 42L672 43L674 32M680 43L680 32L674 32L672 43L680 43M673 55L680 53L680 43L675 43L673 55M662 56L673 55L675 43L663 42L662 56M657 57L662 56L663 42L658 42L657 57M651 45L640 60L657 57L658 49L651 45M652 36L652 43L651 45L658 49L658 38L652 36M652 20L652 36L658 38L660 19L652 20M660 19L670 19L669 9L662 8L660 19M652 6L652 20L660 19L662 8L652 6M669 0L652 0L652 6L669 9L669 0M669 10L670 19L682 18L681 10L669 10M679 0L669 0L669 10L681 10L679 0M681 12L682 18L692 18L691 13L681 12M691 0L679 0L681 12L691 13L691 0M701 0L691 0L691 13L702 15L701 0M711 0L701 0L702 15L709 15L711 0M721 8L721 0L711 0L710 8L721 8M721 17L721 8L710 8L709 15L721 17M698 28L708 27L707 16L695 19L698 28M692 20L692 29L698 28L695 19L692 20M707 15L691 13L692 20L707 16L707 15M721 26L721 17L707 15L708 27L721 26M693 47L694 51L709 49L709 41L693 47M693 40L693 47L709 41L709 39L693 40M703 28L692 29L693 40L701 40L703 28M710 27L703 28L701 40L709 39L710 27M721 38L721 26L710 27L710 36L721 38M721 41L721 38L710 36L709 43L721 41M721 47L721 41L709 43L709 49L721 47M649 78L655 69L646 63L640 69L649 78M636 73L649 78L649 78L640 69L636 73M641 60L640 60L634 69L632 72L636 73L646 63L641 60M663 56L641 60L655 69L663 56M675 72L677 68L668 64L666 69L675 72M663 84L670 87L675 72L666 69L663 84M652 74L649 78L663 84L664 80L652 74M657 66L652 74L664 80L666 71L657 66M661 60L657 66L666 71L668 64L661 60M675 54L663 56L661 60L670 65L675 54M682 53L675 54L670 65L677 68L682 53M695 88L699 80L686 76L684 82L695 88M680 90L692 95L695 88L684 82L680 90M671 83L670 87L680 90L682 87L671 83M675 73L671 83L682 87L686 76L675 73M703 70L704 69L690 61L688 66L703 70M692 78L699 80L703 70L695 68L692 78M685 76L692 78L695 68L688 66L685 76M677 68L675 73L685 76L687 71L677 68M681 55L677 68L687 71L690 61L681 55M691 52L682 53L681 55L688 60L691 52M705 49L691 52L688 60L697 65L705 49M700 58L697 65L704 69L708 61L700 58M714 48L705 49L700 58L708 61L714 48M721 52L721 47L714 48L711 54L721 52M713 54L711 54L705 67L714 67L713 54M721 66L721 52L713 54L714 67L721 66M710 67L705 67L700 77L711 79L710 67M721 80L721 66L710 67L711 79L721 80M697 97L709 102L712 93L700 88L697 97M696 86L692 95L697 97L700 88L696 86M708 78L700 77L696 86L703 89L708 78M717 80L708 78L703 89L712 93L717 80M721 95L721 80L717 80L713 92L721 95M721 106L721 95L713 92L709 102L721 106M651 162L655 151L647 148L642 159L651 162M650 167L651 162L642 159L640 163L650 167M648 173L650 167L640 163L638 167L648 173M646 180L648 173L638 167L634 175L646 180M644 187L646 180L634 175L632 179L644 187M627 190L643 190L644 187L632 179L627 190M618 178L625 190L627 190L633 177L628 174L618 178M610 164L618 178L628 174L610 164M640 145L627 139L622 146L637 153L640 145M643 156L647 148L640 145L637 153L643 156M639 153L626 147L622 157L634 161L639 153M640 163L643 156L639 153L634 161L640 163M629 175L633 177L640 163L633 161L629 175M631 167L633 161L622 157L620 164L631 167M619 169L629 175L631 167L620 164L619 169M623 156L626 147L622 146L618 152L623 156M610 163L610 164L619 169L623 156L618 152L610 163M599 143L603 150L610 163L617 154L599 143M621 136L614 133L607 144L617 148L621 136M620 149L627 139L621 136L617 148L620 149M606 147L617 154L620 149L607 144L606 147M600 136L598 141L599 143L606 147L610 140L600 136M604 129L600 136L610 140L614 133L604 129M646 147L655 151L660 134L655 130L646 147M653 134L655 130L646 125L643 130L653 134M649 141L653 134L643 130L640 136L649 141M636 143L646 147L649 141L640 136L636 143M644 129L646 125L636 120L634 125L644 129M629 140L636 143L644 129L634 125L629 140M634 126L636 120L625 113L621 122L634 126M631 135L634 126L621 122L618 130L631 135M616 134L629 140L631 135L618 130L616 134M607 123L604 129L616 134L618 129L607 123M610 116L607 123L618 129L621 122L610 116M615 107L610 116L621 122L625 113L615 107M710 118L721 127L721 106L719 105L710 118M714 112L719 105L708 101L704 106L714 112M700 111L710 118L714 112L704 106L700 111M694 106L700 111L708 101L699 98L694 106M690 103L694 106L699 98L692 95L690 103M673 101L688 101L690 103L692 95L679 90L673 101M657 132L660 134L665 116L657 132M669 86L663 84L659 92L663 94L669 86M674 99L679 90L669 86L663 94L674 99M663 94L659 92L654 105L658 107L663 94M667 112L670 101L673 101L674 99L663 94L658 107L667 112M663 110L654 105L650 115L659 119L663 110M663 121L665 116L667 112L663 110L659 119L663 121M655 131L657 132L663 121L659 119L655 131M645 125L655 131L659 119L650 115L645 125M650 93L640 90L636 97L647 102L650 93M654 105L658 96L650 93L647 102L654 105M646 101L636 97L634 100L642 109L646 101M649 116L654 105L646 101L642 109L649 116M636 120L645 125L649 116L643 110L636 120M640 114L643 110L634 100L629 108L640 114M625 113L636 120L640 114L629 108L625 113M619 99L615 107L625 113L629 108L619 99M621 94L619 99L629 108L633 102L621 94M626 98L633 102L640 90L634 88L626 98M626 85L621 94L626 98L634 88L626 85M650 93L658 96L663 84L655 81L650 93M644 91L650 93L655 81L648 78L644 91M639 90L644 91L648 78L643 76L639 90M627 82L626 85L639 90L640 85L627 82M632 72L627 82L640 85L643 76L632 72M721 535L721 519L703 520L703 535L721 535M721 549L721 535L703 535L703 549L721 549M703 563L721 563L721 549L703 549L703 563M703 546L703 534L682 534L683 545L703 546M683 563L703 563L703 546L683 545L683 563M672 534L672 563L683 563L682 534L672 534M672 522L672 534L703 534L703 520L672 522M712 520L721 519L721 494L711 494L712 520M712 508L711 494L689 493L689 508L712 508M689 521L712 520L712 508L689 508L689 521M672 493L672 522L689 521L689 493L672 493M721 475L721 461L691 461L690 473L721 475M711 494L721 494L721 475L710 474L711 494M689 493L711 494L710 474L690 473L689 493M672 484L672 493L689 493L690 482L672 484M672 461L672 484L690 482L691 461L672 461M688 461L705 461L704 435L686 435L688 461M672 436L672 461L688 461L686 435L672 436M682 413L672 413L672 436L682 436L682 413M702 413L682 413L682 436L704 435L702 413M721 432L721 413L702 413L703 434L721 432M721 461L721 432L703 434L705 461L721 461M677 399L677 373L651 373L651 400L677 399M677 413L677 399L651 400L651 413L677 413M677 432L677 413L651 413L651 432L677 432M651 443L677 443L677 432L651 432L651 443M621 443L651 443L651 421L622 420L621 443M607 420L607 443L621 443L622 420L607 420M629 421L651 421L651 392L628 392L629 421M607 392L607 420L629 421L628 392L607 392M626 373L607 373L607 392L624 392L626 373M651 373L626 373L624 392L651 392L651 373M684 591L686 604L701 604L701 589L684 591M701 573L681 573L684 591L701 589L701 573M721 589L721 573L701 573L701 590L721 589M721 605L721 589L701 590L701 604L721 605M721 618L721 605L701 604L700 616L721 618M700 629L721 629L721 618L700 616L700 629M690 629L700 629L701 604L686 604L690 629M672 629L690 629L686 609L670 609L672 629M664 609L664 629L672 629L670 609L664 609M664 596L664 609L686 609L685 598L664 596M664 586L664 596L685 598L682 583L664 586M681 573L664 573L664 586L682 583L681 573M114 551L115 562L131 561L130 552L114 551M158 573L161 564L147 565L148 574L158 573M141 594L150 596L154 586L146 585L141 594M128 593L136 594L141 584L129 581L128 593M88 547L84 548L83 559L89 559L88 547M83 584L84 590L96 588L95 581L83 584M105 564L98 564L99 570L107 569L105 564M113 577L112 573L99 575L99 579L113 577M76 614L89 606L85 598L72 604L76 614M66 619L72 616L68 605L66 619M23 608L22 605L13 604L14 610L23 608M62 549L52 549L53 555L62 553L62 549M42 557L43 550L34 550L34 558L42 557M96 502L97 498L83 498L83 499L96 502M73 544L76 544L78 529L74 528L73 544M52 515L53 519L62 515L61 511L52 515M47 545L52 545L51 535L46 535L47 545M33 533L42 534L41 526L34 526L33 533M2 521L2 532L6 532L8 522L2 521M16 472L23 471L24 462L18 463L16 472M25 454L25 448L17 448L18 454L25 454M8 427L2 427L2 437L7 436L8 427M38 427L32 427L30 450L36 450L38 427M100 478L96 475L89 467L86 480L99 483L100 478M110 485L104 480L101 501L108 502L110 485M126 495L114 487L112 503L123 504L126 495M121 541L124 541L120 519L117 519L121 541M128 509L122 509L126 527L130 527L128 509M146 517L144 511L132 510L134 521L146 517M690 27L690 20L682 21L682 27L690 27M664 54L671 53L672 45L665 44L664 54M651 48L645 57L655 55L655 50L651 48M654 22L654 35L656 35L657 22L654 22M689 2L682 2L683 10L689 10L689 2M708 2L703 2L704 13L707 13L708 2M719 78L719 69L712 69L713 77L719 78M714 82L709 81L706 88L711 91L714 82M621 179L626 188L626 188L630 178L628 177L621 179M637 146L628 142L625 145L636 150L637 146M674 524L674 532L701 532L701 522L674 524M692 518L710 518L709 510L691 510L692 518M719 473L719 464L693 463L693 471L719 473M674 486L674 490L687 491L687 485L674 486M690 459L703 459L701 437L688 438L690 459M674 438L674 458L686 459L684 438L674 438M680 415L674 415L674 434L680 434L680 415M719 430L719 415L705 415L706 431L719 430M675 397L675 375L653 375L653 398L675 397M653 441L675 441L675 434L653 435L653 441M623 441L649 441L649 423L624 423L623 441M609 422L609 441L619 441L619 422L609 422M631 418L649 419L649 394L631 394L631 418M691 627L698 627L698 607L688 606L691 627M666 588L666 594L682 595L681 586L666 588M679 575L666 575L666 584L680 582L679 575" stroke="#2a2a2a" stroke-width="1" fill="none"/>
<path d="M383 305L382 310L377 309L378 304ZM470 303L467 312L460 309L463 300ZM486 24L485 31L478 30L480 23ZM458 323L455 330L451 328L454 321ZM592 104L595 107L589 113L586 109ZM431 290L426 299L420 297L425 287ZM542 21L545 25L542 27L539 24ZM548 110L556 116L553 121L545 115ZM443 294L450 300L446 305L439 298ZM446 126L445 136L438 136L439 126ZM487 14L494 18L491 24L484 20ZM683 354L688 355L688 358L683 358ZM319 578L319 586L314 586L314 578ZM416 265L420 269L417 272L413 268ZM369 326L369 332L364 331L364 326ZM88 244L84 249L79 244L84 240ZM530 7L529 11L525 9L526 5ZM303 219L298 228L293 225L298 216ZM663 415L666 424L660 426L658 417ZM554 50L557 54L555 56L551 52ZM254 341L262 345L259 350L252 346ZM20 76L18 80L14 79L15 75ZM401 339L391 345L388 339L397 334ZM37 69L40 76L36 78L33 71ZM31 214L21 216L20 213L30 211ZM402 318L399 326L395 325L398 317ZM252 297L258 299L256 305L250 302ZM387 295L392 295L391 300L387 300ZM601 597L604 601L601 603L598 599ZM557 405L552 414L548 412L553 403ZM424 336L415 337L415 333L423 332ZM5 89L9 89L8 96L4 96ZM39 342L44 343L42 350L37 349ZM252 25L258 28L256 33L250 30ZM548 -5L551 4L546 6L543 -4ZM429 287L440 287L440 293L429 293ZM421 260L423 269L420 270L417 261ZM499 175L496 176L493 171L497 169ZM387 312L391 315L388 318L385 314ZM329 209L338 214L336 219L327 214ZM431 307L426 310L424 305L429 303ZM434 315L435 322L429 323L429 315ZM655 436L661 438L658 445L653 443ZM169 516L175 519L173 523L167 519ZM556 312L560 314L558 319L554 317ZM581 478L585 483L580 487L576 483ZM539 189L534 198L529 196L535 186ZM547 60L551 65L549 67L544 62ZM372 196L374 202L371 203L369 197ZM425 284L428 291L424 293L421 286ZM24 13L21 17L17 14L19 10ZM536 -3L539 2L536 4L533 -1ZM694 143L689 151L685 148L690 140ZM477 301L472 303L470 297L476 295ZM410 345L415 347L414 350L409 348ZM551 22L550 29L546 28L548 21ZM457 166L461 172L454 176L450 170ZM421 282L429 283L428 288L421 287ZM476 306L477 316L469 316L468 307ZM368 310L370 314L367 316L365 312ZM427 352L429 360L424 361L422 353ZM413 240L422 241L421 248L412 248ZM35 395L39 396L38 400L34 399ZM526 30L525 41L521 40L523 30ZM232 303L232 312L225 312L225 303ZM300 495L308 496L307 503L299 502ZM410 271L407 273L405 270L408 268ZM569 380L563 382L562 378L568 376ZM571 62L564 67L560 60L567 56ZM496 65L505 70L501 76L493 71ZM105 466L108 470L102 474L99 470ZM469 130L467 135L463 133L465 129ZM531 154L528 160L522 158L526 151ZM590 582L587 592L581 590L585 580ZM386 551L382 554L378 550L383 547ZM386 570L390 573L387 577L383 574ZM606 110L603 116L596 113L599 106ZM348 312L352 320L348 323L343 315ZM181 157L172 159L170 153L180 151ZM321 265L322 276L315 277L314 266ZM432 320L434 327L430 328L428 321ZM578 33L572 36L570 32L577 29ZM397 333L389 340L386 336L394 329ZM213 67L220 68L219 72L212 71ZM469 241L463 244L462 241L468 238ZM272 45L270 51L263 49L265 43ZM390 59L395 66L390 70L384 63ZM639 533L635 535L633 532L637 530ZM233 574L237 577L235 581L230 578ZM439 243L439 247L432 247L432 242ZM391 320L398 325L397 327L389 322ZM372 447L366 456L360 452L366 443ZM531 351L530 356L524 355L525 349ZM401 346L393 348L391 344L399 341ZM12 147L10 153L3 150L5 144ZM363 277L370 280L367 286L360 282ZM559 47L565 51L562 56L556 52ZM370 454L366 465L360 462L364 452ZM589 147L599 153L597 156L588 150ZM430 260L434 268L429 270L425 263ZM155 178L150 183L145 178L149 173ZM386 267L382 272L379 269L383 265ZM465 282L457 286L455 282L463 278ZM120 434L112 438L110 434L119 430ZM610 625L608 631L602 629L604 623ZM526 510L520 511L519 508L525 507ZM456 319L448 324L446 320L454 315ZM555 554L544 555L544 552L555 550ZM187 299L194 304L189 310L182 304ZM388 305L392 315L385 318L381 308ZM410 354L406 355L404 348L408 347ZM590 141L599 143L598 147L589 144ZM452 246L462 250L460 254L450 250ZM296 257L295 261L289 259L290 255ZM412 289L404 296L400 291L408 284ZM663 122L667 124L664 130L660 129ZM370 323L380 326L378 331L369 327ZM474 273L482 274L482 278L474 278ZM270 361L267 364L263 360L266 357ZM577 545L584 553L577 558L571 550ZM45 5L42 12L39 11L42 4ZM371 284L376 288L371 294L366 289ZM677 598L670 603L667 598L673 593ZM527 479L530 486L524 489L521 482ZM467 239L461 242L459 237L465 233ZM310 117L311 122L307 123L306 119ZM434 257L437 262L434 265L430 259ZM506 119L511 121L508 128L503 125ZM382 275L389 283L384 286L378 278ZM361 582L360 591L353 590L355 581ZM54 217L44 217L44 210L54 210ZM473 20L478 21L476 25L472 24ZM419 66L416 74L412 73L415 64ZM458 253L456 260L451 259L453 252ZM396 574L398 580L393 582L391 575ZM524 117L522 125L519 124L521 117ZM89 202L91 207L86 210L84 204ZM370 199L365 201L363 195L368 194ZM565 520L568 527L565 529L562 522ZM401 302L391 303L391 299L401 298ZM436 333L436 340L430 341L429 333ZM242 95L249 100L244 106L237 100ZM22 325L23 334L18 334L17 326ZM452 608L459 611L458 614L451 611ZM241 -2L240 4L236 4L236 -2ZM448 504L444 506L441 500L445 498ZM337 309L335 313L330 311L331 307ZM196 376L204 378L203 383L194 380ZM55 148L63 152L60 158L52 155ZM327 608L333 611L331 614L326 611Z" stroke="#333" stroke-width="1" fill="none"/>
<path d="M270.5 210.8L278.7 194.3L344.9 155.7L356.0 153.0L372.5 208.0L372.5 216.3L289.8 227.4L273.2 224.6ZM613.9 381.9L675.4 389.1L671.8 407.2L613.9 398.2ZM448.9 589.2L475.9 582.0L477.7 614.5L450.7 607.3ZM62.0 166.0L87.0 160.0L92.0 178.0L68.0 183.0ZM58.0 187.0L82.0 180.0L85.0 195.0L62.0 199.0ZM121.0 166.0L140.0 160.0L147.0 175.0L125.0 179.0ZM147.0 165.0L167.0 161.0L172.0 175.0L150.0 179.0ZM72.0 97.0L95.0 97.0L98.0 111.0L75.0 112.0ZM447.0 413.0L482.0 410.0L481.0 426.0L448.0 429.0Z" stroke="#222" stroke-width="1.3" fill="none"/>
<path d="M84.6 491.0L100.8 470.4L115.2 468.6L129.6 456.0L133.0 441.6L148.3 420.0L180.9 381.8L217.0 354.7L240.0 342.0L276.2 318.5L316.0 302.2L375.6 291.4L420.9 278.7L451.6 266.0L480.0 248.0L490.9 237.0L498.0 221.0L501.7 210.0L509.0 186.0L523.4 178.0L534.0 166.5L539.7 155.6L560.0 144.6L577.7 142.0" stroke="#f2f200" stroke-width="6" fill="none" stroke-linecap="round" stroke-linejoin="round"/>
<text x="276" y="276" fill="#f2f200" font-family="Liberation Sans" font-weight="bold" font-size="9.5" letter-spacing="0.9">CAMINO DE LUBRÍN</text>
</symbol></defs></svg>
<div id="clip">
  <!-- tab strip -->
  <div class="a" style="left:56px;top:38px;width:1920px;height:88px;background:#1e1e1e"></div>
  <div class="a tl" style="left:69px;background:#fe5f57"></div>
  <div class="a tl" style="left:92px;background:#febc2e"></div>
  <div class="a tl" style="left:115px;background:#28c840"></div>
  <div class="a" style="left:142px;top:44px;width:232px;height:40px;background:#363636;border-radius:10px 10px 0 0"></div>
  <svg class="a" style="left:132px;top:68px" width="10" height="10"><path d="M0 10 Q10 10 10 0 V10Z" fill="#363636"/></svg>
  <svg class="a" style="left:374px;top:68px" width="10" height="10"><path d="M10 10 Q0 10 0 0 V10Z" fill="#363636"/></svg>
  <svg class="a" style="left:150px;top:50px" width="16" height="16" viewBox="0 0 16 16"><path d="M1 0.5h14l-1 2H2z" fill="#e8961a"/><path d="M2 3.5h12v1.2H2z" fill="#e8961a"/><path d="M3 5.5h3.2l1.8 4.5 1.8-4.5H13v10H10.6V9.5L8 15.5 5.5 9.5v6H3z" fill="#1d5db5"/><path d="M3 5.5h2.5v10H3z" fill="#0e2a55"/></svg>
  <div class="a" style="left:174px;top:50.5px;color:#e3e3e3;font-size:12.6px;line-height:16px;letter-spacing:0px">Camino de Lubrín</div>
  <svg class="a" style="left:352px;top:53px" width="11" height="11" viewBox="0 0 11 11"><path d="M1.5 1.5l8 8M9.5 1.5l-8 8" stroke="#d8d8d8" stroke-width="1.4"/></svg>
  <svg class="a" style="left:388px;top:52px" width="12" height="12" viewBox="0 0 12 12"><path d="M6 0.5v11M0.5 6h11" stroke="#d8d8d8" stroke-width="1.5"/></svg>
  <div class="a" style="left:1942px;top:44px;width:28px;height:28px;border-radius:8px;background:#2c2c2c"></div>
  <svg class="a" style="left:1950px;top:52px" width="12" height="12" viewBox="0 0 12 12"><path d="M2.5 4.5l3.5 3.5 3.5-3.5" stroke="#e0e0e0" stroke-width="1.6" fill="none"/></svg>
  <!-- toolbar -->
  <div class="a" style="left:57px;top:78px;width:1918px;height:47px;background:#363636;border-radius:10px 10px 0 0"></div>
  <div class="a" style="left:142px;top:78px;width:232px;height:10px;background:#363636"></div>
  <svg class="a" style="left:70px;top:93px" width="16" height="16" viewBox="0 0 16 16"><path d="M14.2 8H2.5M8 2.2 2.2 8 8 13.8" stroke="#c8c8c8" stroke-width="1.5" fill="none"/></svg>
  <svg class="a" style="left:106px;top:93px" width="16" height="16" viewBox="0 0 16 16"><path d="M1.8 8h11.7M8 2.2 13.8 8 8 13.8" stroke="#767676" stroke-width="1.5" fill="none"/></svg>
  <svg class="a" style="left:142px;top:93px" width="16" height="16" viewBox="0 0 16 16"><path d="M13.3 8.2A5.3 5.3 0 1 1 11.6 4.2" stroke="#c8c8c8" stroke-width="1.5" fill="none"/><path d="M13.6 1.8v4.2H9.4" stroke="#c8c8c8" stroke-width="1.5" fill="none"/></svg>
  <div class="a" style="left:177px;top:84px;width:1596px;height:34px;background:#272727;border-radius:17px"></div>
  <div class="a" style="left:181px;top:89px;width:24px;height:24px;background:#363636;border-radius:50%"></div>
  <svg class="a" style="left:185px;top:93px" width="16" height="16" viewBox="0 0 16 16" fill="none" stroke="#d0d0d0" stroke-width="1.3"><circle cx="4" cy="4.6" r="1.6"/><path d="M7.5 4.6h6M2 11.2h6"/><circle cx="11.5" cy="11.2" r="1.6"/></svg>
  <div class="a" style="left:213px;top:92px;color:#e8e8e8;font-size:15.1px;line-height:18px;white-space:nowrap">antas.inventariomunicipal.es<span style="color:#c6c6c6">/inventario/ficha/249</span></div>
  <svg class="a" style="left:1708px;top:92px" width="18" height="18" viewBox="0 0 18 18" fill="none" stroke="#d0d0d0" stroke-width="1.4"><circle cx="7.5" cy="7.5" r="5"/><path d="M11.2 11.2l4.5 4.5M5 7.5h5"/></svg>
  <svg class="a" style="left:1740px;top:92px" width="18" height="18" viewBox="0 0 18 18"><path d="M9 1.8l2.1 4.6 5 .5-3.8 3.4 1.1 4.9L9 12.7l-4.4 2.5 1.1-4.9L1.9 6.9l5-.5z" fill="none" stroke="#d0d0d0" stroke-width="1.4" stroke-linejoin="round"/></svg>
  <div class="a" style="left:1788.5px;top:91px;width:20.5px;height:20.5px;border-radius:50%;background:#7b50c8"></div>
  <div class="a" style="left:1788.5px;top:93.5px;width:20.5px;text-align:center;color:#f0eaff;font-size:12px;line-height:15px">S</div>
  <div class="a" style="left:1821px;top:84px;width:149px;height:34px;background:#003b6a;border-radius:17px"></div>
  <div class="a" style="left:1836.5px;top:92.5px;color:#cfe5ff;font-size:13.6px;line-height:17px;letter-spacing:0px">Acción necesaria</div>
  <svg class="a" style="left:1949px;top:93px" width="8" height="17" viewBox="0 0 8 17" fill="#cfe5ff"><circle cx="4" cy="2.5" r="1.6"/><circle cx="4" cy="8.5" r="1.6"/><circle cx="4" cy="14.5" r="1.6"/></svg>
  <!-- content -->
  <div class="a" style="left:57px;top:125px;width:1918px;height:962px;background:#121212"></div>
  <!-- sidebar -->
  <div class="a" style="left:57px;top:125px;width:188px;height:962px;background:#0b0b0b"></div>
  <div class="a" style="left:245px;top:125px;width:15px;height:962px;background:#141414;border-right:1px solid #1c1c1c"></div>
  <div class="a" style="left:249px;top:128px;width:8px;height:915px;background:#333;border-radius:4px"></div>

<div class="sec" style="top:204.0px">Inicio</div>
<div class="nav" style="top:231.0px;left:101.5px">Bienvenida</div>
<svg class="a" style="left:79px;top:230px" width="13" height="13" viewBox="0 0 24 24" fill="none" stroke="#6b6b6b" stroke-width="1.7" stroke-linejoin="round" stroke-linecap="round"><path d="M3 10.5 12 3l9 7.5M5 9v11h5v-6h4v6h5V9"/></svg>
<div class="nav" style="top:257.2px;left:101.5px">Mapa</div>
<svg class="a" style="left:79px;top:256px" width="13" height="13" viewBox="0 0 24 24" fill="none" stroke="#6b6b6b" stroke-width="1.7" stroke-linejoin="round" stroke-linecap="round"><path d="M3 6l6-3 6 3 6-3v15l-6 3-6-3-6 3zM9 3v15M15 6v15"/></svg>
<div class="sec" style="top:282.5px">Gestión</div>
<div class="nav" style="top:308.2px;left:101.5px">Gestión de Usuarios</div>
<svg class="a" style="left:79px;top:307px" width="13" height="13" viewBox="0 0 24 24" fill="none" stroke="#6b6b6b" stroke-width="1.7" stroke-linejoin="round" stroke-linecap="round"><circle cx="9" cy="7" r="3.5"/><path d="M2.5 20c0-4 3-6.5 6.5-6.5s6.5 2.5 6.5 6.5z"/><circle cx="17" cy="8" r="2.5"/><path d="M16 13c3.5 0 5.5 2.5 5.5 6H17"/></svg>
<div class="nav" style="top:334.3px;left:101.5px">Informes</div>
<svg class="a" style="left:79px;top:334px" width="13" height="13" viewBox="0 0 24 24" fill="none" stroke="#6b6b6b" stroke-width="1.7" stroke-linejoin="round" stroke-linecap="round"><rect x="3" y="8" width="12" height="13" rx="1.5"/><path d="M7 8V5.5A1.5 1.5 0 0 1 8.5 4h9A1.5 1.5 0 0 1 19 5.5v11a1.5 1.5 0 0 1-1.5 1.5H15"/><path d="M7 12h4M7 15h4M7 18h3"/></svg>
<div class="nav" style="top:361.3px;left:101.5px">Gestión de Fichas</div>
<svg class="a" style="left:79px;top:360px" width="13" height="13" viewBox="0 0 24 24" fill="none" stroke="#6b6b6b" stroke-width="1.7" stroke-linejoin="round" stroke-linecap="round"><path d="M5 3h9l5 5v13H5z"/><path d="M14 3v5h5M12 11v7M8.5 14.5h7"/></svg>
<div class="sec" style="top:385.2px">Epígrafes</div>
<div class="nav" style="top:411.3px;left:100.5px">Inmuebles</div>
<div class="nav" style="top:439.3px;left:102.0px">Ver todos</div>
<div class="nav" style="top:466.2px;left:102.0px">Vías Urbanas</div>
<div class="nav" style="top:492.3px;left:102.0px">Vías Rústicas</div>
<div class="nav" style="top:518.1px;left:102.0px">Parques y jardines</div>
<div class="nav" style="top:539.3px;left:102.0px">Terrenos Urbanos o<br>Urbanizables</div>
<div class="nav" style="top:571.3px;left:102.0px">Terrenos No urbanos o<br>Rústicos</div>
<div class="nav" style="top:603.2px;left:102.0px">Edificaciones y otras<br>construcciones</div>
<div class="nav" style="top:642.1px;left:101.5px">Derechos Reales</div>
<svg class="a" style="left:79px;top:641px" width="13" height="13" viewBox="0 0 24 24" fill="none" stroke="#6b6b6b" stroke-width="1.7" stroke-linejoin="round" stroke-linecap="round"><path d="M12 3v18M6 21h12M4 7h16M6 7l-3 7a3 3 0 0 0 6 0zM18 7l-3 7a3 3 0 0 0 6 0z"/></svg>
<div class="nav" style="top:662.3px;left:101.5px">Muebles Histórico-<br>Artísticos</div>
<svg class="a" style="left:79px;top:668px" width="13" height="13" viewBox="0 0 24 24" fill="none" stroke="#6b6b6b" stroke-width="1.7" stroke-linejoin="round" stroke-linecap="round"><path d="M10 4l1.8 5.2L17 11l-5.2 1.8L10 18l-1.8-5.2L3 11l5.2-1.8zM18 3l.8 2.2L21 6l-2.2.8L18 9l-.8-2.2L15 6l2.2-.8zM17 15l.6 1.4 1.4.6-1.4.6L17 19l-.6-1.4L15 17l1.4-.6z"/></svg>
<div class="nav" style="top:694.0px;left:101.5px">Valores Mobiliarios</div>
<svg class="a" style="left:79px;top:693px" width="13" height="13" viewBox="0 0 24 24" fill="none" stroke="#6b6b6b" stroke-width="1.7" stroke-linejoin="round" stroke-linecap="round"><rect x="2" y="5" width="20" height="12" rx="1.5"/><circle cx="12" cy="11" r="3"/><path d="M4 20h16"/></svg>
<div class="nav" style="top:721.3px;left:101.5px">Derechos Personales</div>
<svg class="a" style="left:79px;top:720px" width="13" height="13" viewBox="0 0 24 24" fill="none" stroke="#6b6b6b" stroke-width="1.7" stroke-linejoin="round" stroke-linecap="round"><circle cx="12" cy="8" r="4"/><path d="M4 21c0-4.5 3.5-7 8-7s8 2.5 8 7z"/></svg>
<div class="nav" style="top:747.1px;left:101.5px">Vehículos</div>
<svg class="a" style="left:79px;top:746px" width="13" height="13" viewBox="0 0 24 24" fill="none" stroke="#6b6b6b" stroke-width="1.7" stroke-linejoin="round" stroke-linecap="round"><path d="M2 6h12v11H2zM14 10h4l4 4v3h-8z"/><circle cx="6" cy="18" r="2"/><circle cx="17" cy="18" r="2"/></svg>
<div class="nav" style="top:773.3px;left:101.5px">Semovientes</div>
<svg class="a" style="left:79px;top:772px" width="13" height="13" viewBox="0 0 24 24" fill="none" stroke="#6b6b6b" stroke-width="1.7" stroke-linejoin="round" stroke-linecap="round"><path d="M5 3h9l5 5v13H5z"/><path d="M14 3v5h5M8 17l3-3 2 2 3-3"/></svg>
<div class="nav" style="top:800.3px;left:101.5px">Otros Muebles</div>
<svg class="a" style="left:79px;top:800px" width="13" height="13" viewBox="0 0 24 24" fill="none" stroke="#6b6b6b" stroke-width="1.7" stroke-linejoin="round" stroke-linecap="round"><path d="M12 2.5 21 7v10l-9 4.5L3 17V7zM3 7l9 4.5L21 7M12 11.5v10"/></svg>
<div class="nav" style="top:826.0px;left:101.5px">Bienes Revertibles</div>
<svg class="a" style="left:79px;top:825px" width="13" height="13" viewBox="0 0 24 24" fill="none" stroke="#6b6b6b" stroke-width="1.7" stroke-linejoin="round" stroke-linecap="round"><path d="M3 9l9-5 9 5zM4 21h16M5 12v7M9 12v7M15 12v7M19 12v7M3 21h18"/></svg>
<div class="nav" style="top:853.1px;left:101.5px">Propiedades Inmateriales</div>
<svg class="a" style="left:79px;top:852px" width="13" height="13" viewBox="0 0 24 24" fill="none" stroke="#6b6b6b" stroke-width="1.7" stroke-linejoin="round" stroke-linecap="round"><path d="M9 18h6M10 21h4M12 2.5a6.5 6.5 0 0 0-4 11.6c.9.7 1 1.6 1 2.9h6c0-1.3.1-2.2 1-2.9a6.5 6.5 0 0 0-4-11.6z"/></svg>
<svg class="a" style="left:79px;top:411px" width="9" height="9" viewBox="0 0 24 24" fill="none" stroke="#6b6b6b" stroke-width="2.4" stroke-linecap="round"><path d="M5 9l7 7 7-7"/></svg>
<div class="a" style="left:82px;top:434px;width:1px;height:196px;background:#242424"></div>

  <!-- logos -->
  <svg class="a" style="left:70px;top:142px" width="146" height="42" viewBox="70 142 146 42">
    <path d="M72.5 150.5 Q74 146 77 148 Q79 145 81.5 147 Q84 145 86 148 Q89 146 90.5 150.5 L89 154.5 L74 154.5Z" fill="#8a3a1e"/>
    <path d="M73.5 151 L89.5 151 L89 154 L74 154Z" fill="#9a5a18"/>
    <path d="M81.5 142.5v3" stroke="#555" stroke-width="1"/>
    <path d="M72 158 H81.5 V181 Q75 180 72 175 Z" fill="#4a1e45"/>
    <path d="M81.5 158 H91 V175 Q88 180 81.5 181 Z" fill="#1d4a30"/>
    <path d="M74 167h6v4h-6z" fill="#7a6420"/>
    <path d="M72.5 173 q2.5 -1.5 5 0 t4 0 M72.8 176 q2.5 -1.5 5 0 t4 0" stroke="#5a7088" stroke-width="1.3" fill="none"/>
    <path d="M84 161.5l4 3M88 161.5l-4 3M84 169.5l4 3M88 169.5l-4 3" stroke="#8a9a90" stroke-width="1.1"/>
    <path d="M98.5 148.5v33" stroke="#173a22" stroke-width="1"/>
    <defs>
      <linearGradient id="ga" x1="0" y1="0" x2="0" y2="1"><stop offset="0" stop-color="#0e3a1a"/><stop offset="0.55" stop-color="#0b3016"/><stop offset="1" stop-color="#2a5a34"/></linearGradient>
      <linearGradient id="gr" x1="0" y1="0" x2="1" y2="1"><stop offset="0" stop-color="#5a1a22"/><stop offset="1" stop-color="#3a0f26"/></linearGradient>
    </defs>
    <path d="M117 150.5 Q119 150 121 150.5 L138 150.5 Q141 150.5 142.5 153 L147.5 178 Q148 180.7 145 180.7 L135 180.7 Z" fill="url(#ga)"/>
    <path d="M120 150.5 L128 150.5 L131.5 162 L114 162 Z" fill="#4d5e66"/>
    <path d="M109 180.7 L114 167.5 L123 167.5 L118 180.7 Z" fill="#4d5e66"/>
    <path d="M117.5 167.5 L130 167.5 Q134 168 135.5 172 L138 180.7 L128 180.7 Z" fill="url(#gr)"/>
    <path d="M152.2 180.7 V164 Q152.2 160.3 156 160.3 H158.8 Q162.6 160.3 162.6 164 V180.7 M166.2 160.3 H182 M174.1 160.3 V180.7 M184.5 180.7 L189.2 160.3 H191.2 L195.9 180.7 M186.5 174 H194 M213 160.3 H203.5 Q201.8 160.3 201.8 162.5 V167.8 Q201.8 169.8 203.5 169.8 H209.5 Q211.4 169.8 211.4 172 V176.3 Q211.4 178.6 209.5 178.6 H199.7" stroke="#1c4a28" stroke-width="4.3" fill="none"/>
  </svg>
  <svg class="a" style="left:86px;top:920px" width="128" height="118" viewBox="86 920 128 118">
    <path d="M107.7 922.5 H192.9 L190 932.7 H110.5 Z" fill="#7a4a0e"/>
    <path d="M113.8 935.6 H186.4 V939.4 H113.8Z" fill="#7a4a0e"/>
    <path d="M137.8 950.7L150.7 975.1L169.5 943.7V958.8L150.7 990.2L137.8 964.7Z" fill="#0c2d52"/>
    <path d="M166 943.1H183.5L180.6 947.2V986.2L183.5 990.2H166L169.3 986.2V947.2Z" fill="#0d2f55"/>
    <path d="M117.2 943.1H135.2L131.2 947.2V986.2L135.2 990.2H117.2L120.7 986.2V947.2Z" fill="#06101d"/>
    <text x="88.5" y="1015.5" font-family="Liberation Sans" font-size="20" fill="#0a1c33" stroke="#0a1c33" stroke-width="0.7" textLength="121.5" lengthAdjust="spacingAndGlyphs">INVENTARIO</text>
    <text x="95" y="1034.5" font-family="Liberation Sans" font-size="20" fill="#0a1c33" stroke="#0a1c33" stroke-width="0.7" textLength="109.5" lengthAdjust="spacingAndGlyphs">MUNICIPAL</text>
  </svg>
  <div class="a" style="left:56.5px;top:1058px;width:25px;height:25px;border-radius:50%;background:#0c0f14;border:1px solid #161b22"></div>
  <svg class="a" style="left:60px;top:1065px" width="14" height="14" viewBox="0 0 14 14"><circle cx="7" cy="7" r="6.5" fill="#33240f"/><circle cx="4.5" cy="4" r=".8" fill="#15100a"/><circle cx="9" cy="3.5" r=".8" fill="#15100a"/><circle cx="7" cy="7" r=".8" fill="#15100a"/><circle cx="3.5" cy="9" r=".8" fill="#15100a"/><circle cx="9.5" cy="9" r=".8" fill="#15100a"/><circle cx="6.5" cy="11" r=".8" fill="#15100a"/></svg>
  <div class="a" style="left:88.5px;top:1061.5px;color:#565a62;font-size:10px;line-height:12px">info@inventariomunicipal.es</div>

  <div class="a" style="left:1961px;top:125px;width:15px;height:962px;background:#2a2a2a;border-left:1px solid #333"></div>
  <div class="a" style="left:1964.7px;top:127.8px;width:8.6px;height:168px;background:#6a6a6a;border-radius:4.3px"></div>
  <!-- main cards -->
  <div class="card" style="left:286px;top:151px;width:1648px;height:104px"></div>
  <div class="a" style="left:286px;top:167.5px;width:1648px;text-align:center;color:#7a7a7a;font-size:39px;font-weight:bold;line-height:46px;letter-spacing:-0.8px">Camino de Lubrín</div>
  <div class="a" style="left:286px;top:221px;width:1648px;text-align:center;color:#3b4048;font-size:12px;line-height:14px;padding-left:2px">Ficha ID 249</div>
  <div class="card" style="left:286px;top:282px;width:1093px;height:517px"></div>
  <div class="card" style="left:1399px;top:282px;width:535px;height:517px"></div>
  <div class="a" style="left:1421.5px;top:297.5px;color:#8a8a8a;font-size:14.3px;font-weight:bold;line-height:18px;letter-spacing:-0.2px">Vista del Inmueble</div>
  <div class="card" style="left:286px;top:818px;width:814px;height:300px"></div>
  <div class="card" style="left:1120px;top:818px;width:814px;height:300px"></div>
  <div class="a" style="left:287px;top:331px;width:1091px;height:1px;background:#171c24"></div>
  <div class="a" style="left:1400px;top:331px;width:533px;height:1px;background:#171c24"></div>
  <div class="a" style="left:287px;top:867px;width:812px;height:1px;background:#171c24"></div>
  <div class="a" style="left:1121px;top:867px;width:812px;height:1px;background:#171c24"></div>
  <div class="a" style="left:306px;top:297.5px;color:#8a8a8a;font-size:14.3px;font-weight:bold;line-height:18px;letter-spacing:-0.2px">Datos Básicos</div>
  <div class="a" style="left:306px;top:834.5px;color:#8a8a8a;font-size:14.3px;font-weight:bold;line-height:18px;letter-spacing:-0.2px">Mapa de Situación</div>

  <div class="lbl" style="top:351px">ID DE FICHA</div>
  <div class="val" style="top:368px">249</div>
  <div class="lbl" style="top:396px">CÓDIGO DE FICHA</div>
  <div class="val" style="top:412px">110201-249</div>
  <div class="lbl" style="top:440px">DENOMINACIÓN</div>
  <div class="val" style="top:457px">Camino de Lubrín</div>
  <div class="lbl" style="top:485px">NÚCLEO URBANO</div>
  <div class="val" style="top:502px">Otro</div>
  <div class="lbl" style="top:530px">NATURALEZA FISICA</div>
  <div class="val" style="top:547px">Vías Rústicas</div>
  <div class="lbl" style="top:575px">DESTINO FUNCIONAL</div>
  <div class="val" style="top:592px">Circulación de vehiculos y/o personas</div>

  <!-- right card map -->
  <div class="a" style="left:1400px;top:332px;width:533px;height:466px;background:#6e6e6e;border-radius:0 0 9px 9px;overflow:hidden"><svg class="a" style="left:0px;top:0px" width="535" height="467" viewBox="0 0 721 629"><use href="#mp"/></svg><div class="a" style="left:0;top:0;width:533px;height:466px;background:rgba(0,0,0,.53)"></div></div>
  <!-- bottom maps -->
  <svg class="a" style="left:287px;top:868px" width="813" height="219" viewBox="287 868 813 219">
    <rect x="287" y="868" width="813" height="219" fill="#67806f"/>
    <path d="M253 868v219M287 1050h813" stroke="#6c8474" stroke-width="1"/>
    <g fill="none" stroke="#7b7b86" stroke-width="2" stroke-linejoin="round" stroke-linecap="round">
      <path d="M287 882.4L300 883 M402 869L396 876L420.5 909L426.6 921L426.6 935.4L416.4 939.5L398 945.6L373.6 932L361.4 935.4L363.4 949.6L375.6 972L377.7 978L367.5 992.4L369.5 1000.6L378.7 1008.7L373.6 1016.9L345 1006.7L306.4 1023L298.2 1037.3L294 1055.6L286 1063.7"/>
      <path d="M420.5 909L440.9 922L453 925L481.6 949.6L498 953.7L530 960"/>
      <path d="M528.5 988.4L525.4 1014.8L540.7 1022"/>
      <path d="M528.5 990.4L551 1012.8L591.6 1023L632.4 1043.4L673 1084"/>
      <path d="M815.6 1072L860 1074L916 1080.3L935 1087"/>
    </g>
    <g fill="none" stroke="#4b8797" stroke-width="2.6" stroke-linecap="round" stroke-linejoin="round">
      <path d="M465.3 914L497 929.3L520 940"/>
      <path d="M593.7 988.4L622 1010.8L652.7 1047.4L683.3 1082"/>
      <path d="M773.7 1013.4L845 1017.6L907.6 1017.6L999.7 1005L1100 1019.7"/>
    </g>
    <path d="M379 910.5L393 913L390.5 919.5L377 917Z M390 932.5L397 930L403 937.5L396.5 940Z M711 1021L722 1019.5L724 1029L712.5 1030.5Z" fill="#4b8797"/>
    <text x="0" y="0" transform="translate(650 1051) rotate(52)" font-family="Liberation Sans" font-size="11" fill="#2f6a7a">Barranco</text>
    <text x="0" y="0" transform="translate(818 1085) rotate(-17)" font-family="Liberation Sans" font-size="10.5" fill="#3c3c4a">de Lubrín</text>
    <circle cx="693" cy="1088" r="9" fill="#9a2a22"/>
    <rect x="295.2" y="876.3" width="138.5" height="31.6" rx="1" fill="#7f7f7f"/>
    <path d="M358.5 876.3v31.6" stroke="#707070" stroke-width="1"/>
    <text x="309" y="896.5" font-family="Liberation Sans" font-weight="bold" font-size="14.2" fill="#0e0e0e">Mapa</text>
    <text x="372.5" y="896.5" font-family="Liberation Sans" font-size="14.2" fill="#2e2e2e">Satélite</text>
  </svg>
  <svg class="a" style="left:1121px;top:868px" width="813" height="219" viewBox="1121 868 813 219">
    <defs>
      <filter id="nz" x="0" y="0" width="100%" height="100%">
        <feTurbulence type="fractalNoise" baseFrequency="0.28" numOctaves="2" seed="3" result="n"/>
        <feColorMatrix in="n" type="matrix" values="0 0 0 0 0  0 0 0 0 0  0 0 0 0 0  0 0 0 -2.6 1.45" result="a"/>
        <feFlood flood-color="#25262e"/>
        <feComposite in2="a" operator="in"/>
      </filter>
      <filter id="bl"><feGaussianBlur stdDeviation="6"/></filter>
      <filter id="bl2"><feGaussianBlur stdDeviation="1.2"/></filter>
    </defs>
    <rect x="1121" y="868" width="813" height="219" fill="#544e46"/>
    <g filter="url(#bl)" fill="#403f48" opacity=".85">
      <ellipse cx="1215" cy="1000" rx="50" ry="55"/>
      <ellipse cx="1300" cy="935" rx="35" ry="40"/>
      <ellipse cx="1440" cy="950" rx="40" ry="30"/>
      <ellipse cx="1570" cy="915" rx="28" ry="30"/>
      <ellipse cx="1690" cy="1000" rx="55" ry="65"/>
      <ellipse cx="1545" cy="1045" rx="30" ry="40"/>
      <ellipse cx="1160" cy="930" rx="22" ry="40"/>
      <ellipse cx="1650" cy="905" rx="30" ry="25"/>
    </g>
    <path d="M1521 870L1597 873L1596 893L1521 890Z M1521 898L1594 902L1592 923L1521 920Z M1521 929L1591 933L1588 955L1521 952Z M1521 962L1587 966L1582 990L1521 985Z" fill="#3d3b43"/>
    <path d="M1542 895L1598 898M1540 926L1596 930M1538 958L1594 962M1530 988L1585 1000" stroke="#6e675a" stroke-width="3.5" fill="none" opacity=".9"/>
    <path d="M1626 920Q1660 905 1690 910M1624 980Q1660 990 1690 1010" stroke="#6a6458" stroke-width="4" fill="none" opacity=".7"/>
    <path d="M1603 868L1600 960L1585 1087" stroke="#6a6458" stroke-width="7" fill="none"/>
    <path d="M1378 987L1440 1030L1502 1087" stroke="#6a6a6a" stroke-width="8" fill="none"/>
    <path d="M1450 1054L1430 1087" stroke="#666" stroke-width="5" fill="none"/>
    <path d="M1121 960L1170 985L1150 1087L1121 1087Z" fill="#685f53" opacity=".8"/>
    <path d="M1240 990L1330 987L1345 1087L1250 1087Z" fill="#5f584d" opacity=".7"/>
    <g filter="url(#bl2)" fill="#35353e">
      <path d="M1165 995Q1200 985 1245 1000L1240 1060Q1200 1075 1170 1055Z" opacity=".8"/>
      <ellipse cx="1455" cy="1000" rx="6" ry="5"/><ellipse cx="1470" cy="1015" rx="5" ry="5"/><ellipse cx="1486" cy="1005" rx="5" ry="5"/>
      <ellipse cx="1500" cy="1025" rx="6" ry="5"/><ellipse cx="1515" cy="1010" rx="5" ry="5"/><ellipse cx="1528" cy="1030" rx="5" ry="5"/>
      <ellipse cx="1480" cy="1040" rx="5" ry="5"/><ellipse cx="1510" cy="1050" rx="6" ry="5"/><ellipse cx="1535" cy="1060" rx="5" ry="5"/>
      <ellipse cx="1455" cy="1060" rx="5" ry="5"/><ellipse cx="1420" cy="1000" rx="7" ry="6"/><ellipse cx="1395" cy="1010" rx="4" ry="4"/>
    </g>
    <rect x="1121" y="868" width="813" height="219" filter="url(#nz)" opacity=".45"/>
    <path d="M1776 886L1871 880Q1900 878 1934 900L1934 1087L1752 1087Z" fill="#67635a"/><path d="M1776 886L1871 880Q1900 878 1934 900L1934 1087L1752 1087Z" filter="url(#nz)" opacity=".18"/>
    <path d="M1776 886Q1830 892 1890 878" stroke="#77736a" stroke-width="4" fill="none"/>
    <path d="M1882 900Q1900 895 1934 905L1934 1087L1870 1087Q1885 1000 1882 900Z" fill="#57524a"/><path d="M1882 900Q1900 895 1934 905L1934 1087L1870 1087Q1885 1000 1882 900Z" filter="url(#nz)" opacity=".4"/>
    <path d="M1788 868H1875L1872 876Q1830 880 1790 875Z" fill="#2e2e36"/>
    <g fill="#22232c" filter="url(#bl2)">
      <ellipse cx="1885" cy="936" rx="6" ry="8"/><ellipse cx="1900" cy="949" rx="6" ry="8"/><ellipse cx="1903" cy="973" rx="6" ry="9"/>
      <ellipse cx="1893" cy="1006" rx="6" ry="8"/><ellipse cx="1908" cy="1022" rx="5" ry="8"/><ellipse cx="1905" cy="1042" rx="6" ry="9"/><ellipse cx="1789" cy="1081" rx="7" ry="7"/><ellipse cx="1930" cy="1078" rx="5" ry="9"/>
      <ellipse cx="1590" cy="1050" rx="6" ry="8"/><ellipse cx="1580" cy="1075" rx="7" ry="9"/><ellipse cx="1258" cy="1055" rx="6" ry="9"/>
      <ellipse cx="1362" cy="1048" rx="5" ry="7"/><ellipse cx="1400" cy="1070" rx="7" ry="9"/><ellipse cx="1470" cy="1005" rx="5" ry="6"/>
    </g>
    <text x="0" y="0" transform="translate(1497 1018) rotate(40)" font-family="Liberation Sans" font-size="11" fill="#6e7480" opacity=".8">Barranco de los Ca</text>
    <circle cx="1527" cy="1090" r="9" fill="#9a2a22"/>
    <rect x="1894.5" y="876.5" width="31" height="31" rx="1" fill="#7c7c7c"/>
    <path d="M1903.5 888.5v-3.5h3.5M1912.5 885h3.5v3.5M1916 895.5v3.5h-3.5M1907 899h-3.5v-3.5" stroke="#111" stroke-width="2" fill="none"/>
  </svg>

  <!-- modal -->
  <div class="a" style="left:497px;top:225px;width:1024px;height:762px;background:#111722;border-radius:10px;overflow:hidden;box-shadow:0 25px 50px -12px rgba(0,0,0,.55)">
    <div class="a" style="left:0;top:0;width:1024px;height:48px;background:#1c2430;border-bottom:1px solid #2b3441"></div>
    <div class="a" style="left:12.5px;top:15.5px;color:#f0f0f0;font-size:14.3px;font-weight:bold;line-height:18px;letter-spacing:-0.15px">Vista del Inmueble</div>
    <svg class="a" style="left:995px;top:17px" width="13" height="13" viewBox="0 0 13 13"><path d="M1 1l11 11M12 1L1 12" stroke="#8c95a2" stroke-width="1.4"/></svg>
    <div class="a" style="left:0;top:703px;width:1024px;height:59px;background:#1c2430;border-top:1px solid #2b3441"></div>
    <div class="a" style="left:832px;top:717px;width:106px;height:32px;background:#00c04b;border-radius:6px"></div>
    <div class="a" style="left:947px;top:717px;width:64px;height:32px;background:#2d3545;border-radius:6px"></div>
    <div class="a" style="left:864px;top:726px;color:#fff;font-size:13px;line-height:15px">Descargar</div>
    <svg class="a" style="left:845px;top:727px" width="12" height="12" viewBox="0 0 12 12" fill="none" stroke="#fff" stroke-width="1.4" stroke-linecap="round" stroke-linejoin="round"><path d="M6 1v6.5M3.3 5l2.7 2.7L8.7 5M1.5 8.5v1.8h9V8.5"/></svg>
    <div class="a" style="left:960px;top:726px;color:#e0e0e0;font-size:13px;line-height:15px">Cerrar</div>
    <svg class="a" style="left:151px;top:62px;border-radius:8px" width="721" height="629" viewBox="0 0 721 629"><use href="#mp"/></svg>
  </div>
  <div class="a" style="left:56px;top:38px;width:1920px;height:1049px;border-radius:17px;border:1px solid #5e5e5e;pointer-events:none"></div>
</div>
</body></html>
